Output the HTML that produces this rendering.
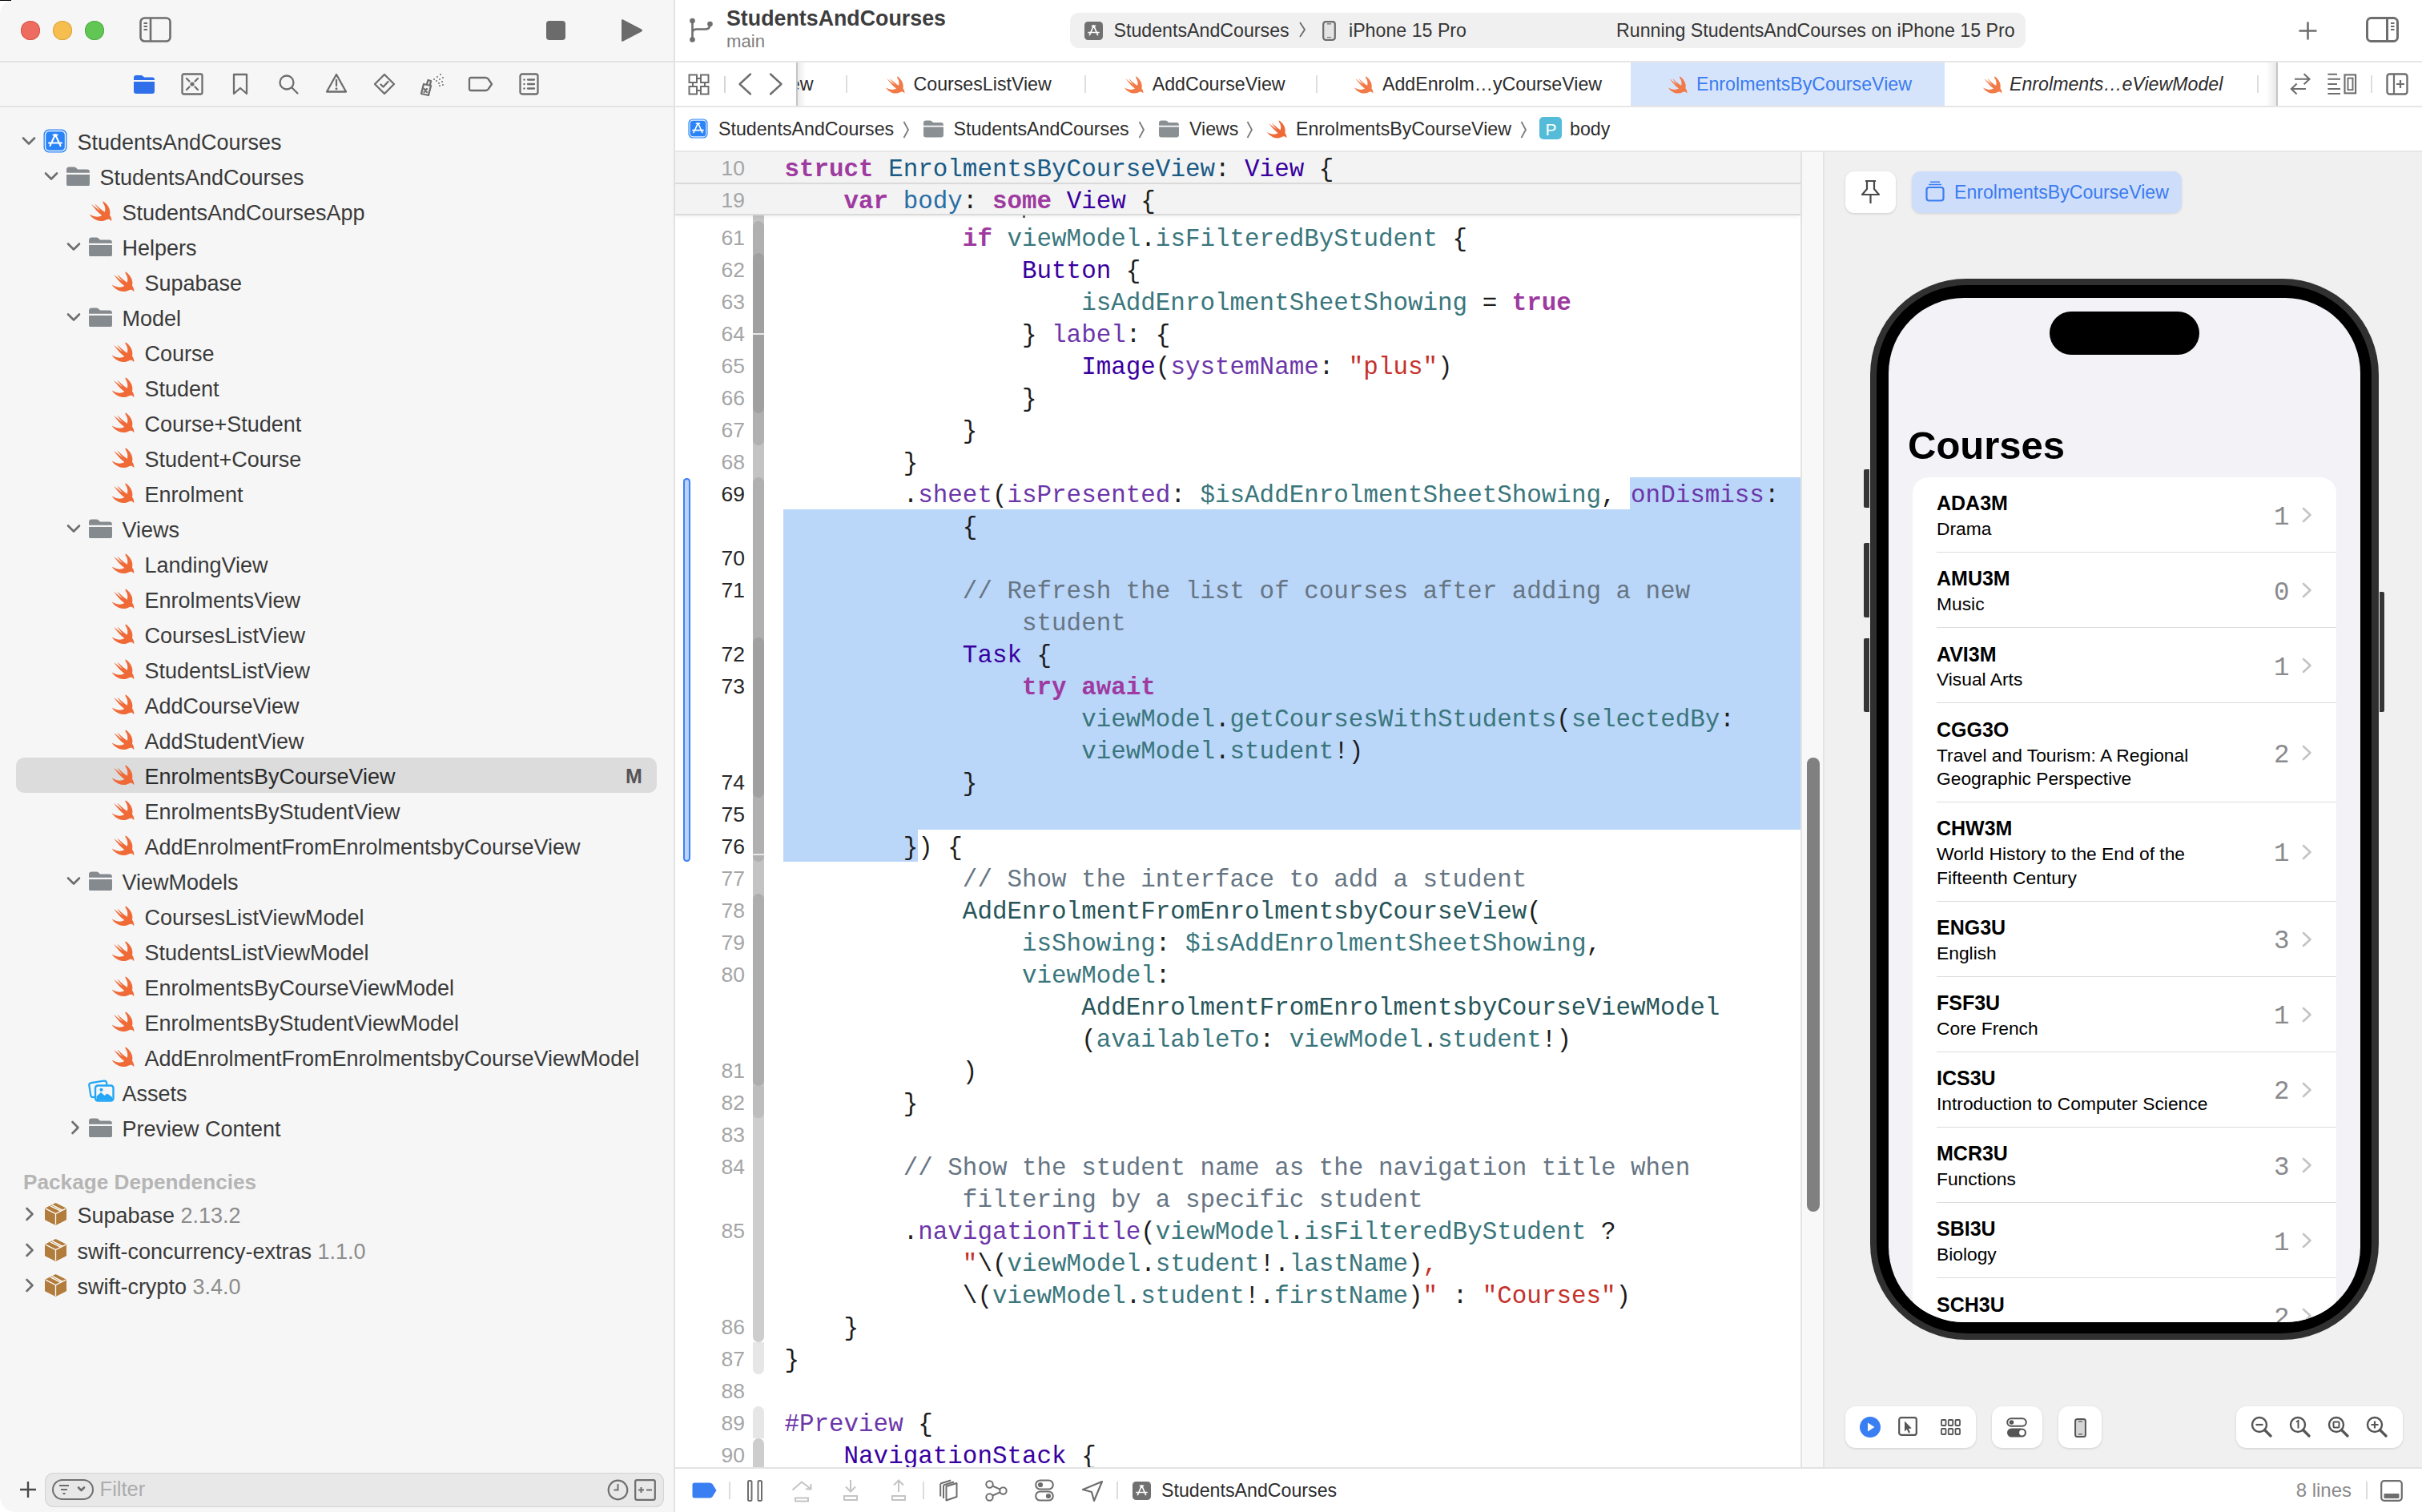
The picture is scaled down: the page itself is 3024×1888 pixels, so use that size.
<!DOCTYPE html>
<html><head><meta charset="utf-8"><title>Xcode</title>
<style>
html,body{margin:0;padding:0;width:3024px;height:1888px;overflow:hidden;background:#fff;}
body{position:relative;font-family:'Liberation Sans', sans-serif;}
.cl span{white-space:pre}
</style></head><body>
<div style="position:absolute;left:0px;top:0px;width:842px;height:1888px;background:#f6f6f6"></div><div style="position:absolute;left:842px;top:0px;width:2182px;height:1888px;background:#ffffff"></div><div style="position:absolute;left:841px;top:0px;width:2px;height:1888px;background:#e2e2e2"></div><div style="position:absolute;left:0px;top:76px;width:841px;height:2px;background:#e3e3e3"></div><div style="position:absolute;left:0px;top:132px;width:841px;height:2px;background:#e3e3e3"></div><div style="position:absolute;left:843px;top:76px;width:2181px;height:2px;background:#e6e6e6"></div><div style="position:absolute;left:843px;top:132px;width:2181px;height:2px;background:#e6e6e6"></div><div style="position:absolute;left:843px;top:188px;width:2181px;height:2px;background:#e6e6e6"></div><div style="position:absolute;left:2278px;top:190px;width:746px;height:1643px;background:#f0f0f0"></div><div style="position:absolute;left:2248px;top:190px;width:30px;height:1643px;background:#f8f8f8"></div><div style="position:absolute;left:2248px;top:190px;width:2px;height:1643px;background:#e4e4e4"></div><div style="position:absolute;left:2276px;top:190px;width:2px;height:1643px;background:#e4e4e4"></div><div style="position:absolute;left:843px;top:1832px;width:2181px;height:2px;background:#e3e3e3"></div><div style="position:absolute;left:26px;top:26px;width:24px;height:24px;background:#ee6b60;border-radius:50%;box-shadow:inset 0 0 0 1px #d8574c"></div><div style="position:absolute;left:66px;top:26px;width:24px;height:24px;background:#f6be4f;border-radius:50%;box-shadow:inset 0 0 0 1px #dba43a"></div><div style="position:absolute;left:106px;top:26px;width:24px;height:24px;background:#62c655;border-radius:50%;box-shadow:inset 0 0 0 1px #4fae43"></div><svg style="position:absolute;left:174px;top:21px;" width="40" height="32" viewBox="0 0 40 32"><rect x="1.5" y="1.5" width="37" height="29" rx="5" fill="none" stroke="#6e6e6e" stroke-width="2.6"/><line x1="14" y1="2" x2="14" y2="30" stroke="#6e6e6e" stroke-width="2.6"/><line x1="5.5" y1="8" x2="10" y2="8" stroke="#6e6e6e" stroke-width="2"/><line x1="5.5" y1="12" x2="10" y2="12" stroke="#6e6e6e" stroke-width="2"/><line x1="5.5" y1="16" x2="10" y2="16" stroke="#6e6e6e" stroke-width="2"/></svg><div style="position:absolute;left:682px;top:26px;width:24px;height:24px;background:#6b6b6b;border-radius:4px"></div><svg style="position:absolute;left:774px;top:23px;" width="30" height="30" viewBox="0 0 30 30"><path d="M2 2.5 Q2 0.5 4 1.6 L27 13.5 Q29 15 27 16.5 L4 28.4 Q2 29.5 2 27.5Z" fill="#6b6b6b"/></svg><svg style="position:absolute;left:166px;top:92px;" width="28" height="26" viewBox="0 0 28 26"><path d="M1 5 Q1 2 4 2 L10 2 Q12 2 13 3.5 L14 4.5 L24 4.5 Q27 4.5 27 7.5 L27 8 L1 8Z" fill="#2f6fea"/><path d="M1 10 L27 10 L27 22 Q27 25 24 25 L4 25 Q1 25 1 22Z" fill="#2f6fea"/></svg><svg style="position:absolute;left:226px;top:91px;" width="28" height="28" viewBox="0 0 28 28"><rect x="1.5" y="1.5" width="25" height="25" rx="2" fill="none" stroke="#6e6e6e" stroke-width="2.3" stroke-linecap="round" stroke-linejoin="round"/><path d="M7 7 L10.5 10.5 M21 7 L17.5 10.5 M7 21 L10.5 17.5 M21 21 L17.5 17.5" fill="none" stroke="#6e6e6e" stroke-width="2.3" stroke-linecap="round" stroke-linejoin="round" stroke-width="2.2"/><circle cx="14" cy="14" r="2.6" fill="#6e6e6e"/></svg><svg style="position:absolute;left:290px;top:91px;" width="20" height="28" viewBox="0 0 20 28"><path d="M2 2 L18 2 L18 26 L10 19 L2 26Z" fill="none" stroke="#6e6e6e" stroke-width="2.3" stroke-linecap="round" stroke-linejoin="round"/></svg><svg style="position:absolute;left:347px;top:92px;" width="27" height="27" viewBox="0 0 27 27"><circle cx="11" cy="11" r="8.5" fill="none" stroke="#6e6e6e" stroke-width="2.3" stroke-linecap="round" stroke-linejoin="round"/><path d="M17.5 17.5 L24.5 24.5" fill="none" stroke="#6e6e6e" stroke-width="2.3" stroke-linecap="round" stroke-linejoin="round" stroke-width="3"/></svg><svg style="position:absolute;left:406px;top:91px;" width="28" height="26" viewBox="0 0 28 26"><path d="M14 2 L26 23.5 L2 23.5Z" fill="none" stroke="#6e6e6e" stroke-width="2.3" stroke-linecap="round" stroke-linejoin="round"/><path d="M14 9 L14 16" fill="none" stroke="#6e6e6e" stroke-width="2.3" stroke-linecap="round" stroke-linejoin="round" stroke-width="2.8"/><circle cx="14" cy="19.8" r="1.5" fill="#6e6e6e"/></svg><svg style="position:absolute;left:466px;top:91px;" width="28" height="28" viewBox="0 0 28 28"><path d="M14 2 L26 14 L14 26 L2 14Z" fill="none" stroke="#6e6e6e" stroke-width="2.3" stroke-linecap="round" stroke-linejoin="round"/><path d="M9.5 14.5 L12.5 17.5 L18.5 11" fill="none" stroke="#6e6e6e" stroke-width="2.3" stroke-linecap="round" stroke-linejoin="round"/></svg><svg style="position:absolute;left:525px;top:91px;" width="32" height="30" viewBox="0 0 32 30"><path d="M4 14 L13 16 L10 28 L1 26Z" fill="none" stroke="#6e6e6e" stroke-width="2.3" stroke-linecap="round" stroke-linejoin="round" stroke-width="2.4"/><path d="M8 14 L9.5 9 L13 10 L12 15" fill="none" stroke="#6e6e6e" stroke-width="2.3" stroke-linecap="round" stroke-linejoin="round" stroke-width="2.2"/><path d="M4.5 20 L8 24 M8 20 L4.5 24" fill="none" stroke="#6e6e6e" stroke-width="2.3" stroke-linecap="round" stroke-linejoin="round" stroke-width="1.8"/><g fill="#6e6e6e"><circle cx="17" cy="8" r="1"/><circle cx="21" cy="5" r="1"/><circle cx="25" cy="2" r="1"/><circle cx="20" cy="10" r="1"/><circle cx="24" cy="8" r="1"/><circle cx="28" cy="6" r="1"/><circle cx="23" cy="13" r="1"/><circle cx="27" cy="11" r="1"/><circle cx="24" cy="16" r="1"/><circle cx="28" cy="15" r="1"/></g></svg><svg style="position:absolute;left:584px;top:95px;" width="32" height="20" viewBox="0 0 32 20"><path d="M2 4 Q2 2 4 2 L22 2 Q24 2 25.5 3.5 L30 10 L25.5 16.5 Q24 18 22 18 L4 18 Q2 18 2 16Z" fill="none" stroke="#6e6e6e" stroke-width="2.3" stroke-linecap="round" stroke-linejoin="round"/></svg><svg style="position:absolute;left:648px;top:91px;" width="25" height="28" viewBox="0 0 25 28"><rect x="1.5" y="1.5" width="22" height="25" rx="2.5" fill="none" stroke="#6e6e6e" stroke-width="2.3" stroke-linecap="round" stroke-linejoin="round"/><path d="M11 8.5 L19 8.5 M11 14 L19 14 M11 19.5 L19 19.5" fill="none" stroke="#6e6e6e" stroke-width="2.3" stroke-linecap="round" stroke-linejoin="round" stroke-width="2.2"/><g fill="#6e6e6e"><circle cx="6.5" cy="8.5" r="1.2"/><circle cx="6.5" cy="14" r="1.2"/><circle cx="6.5" cy="19.5" r="1.2"/></g></svg><svg style="position:absolute;left:27px;top:170px;" width="18" height="12" viewBox="0 0 18 12"><path d="M2 2.5 L9 9.5 L16 2.5" fill="none" stroke="#6e6e6e" stroke-width="2.6" stroke-linecap="round" stroke-linejoin="round"/></svg><svg style="position:absolute;left:54px;top:161.0px;" width="30" height="30" viewBox="0 0 30 30"><rect x="0.5" y="0.5" width="29" height="29" rx="6.5" fill="#2a84f7"/><rect x="2.5" y="2.5" width="25" height="25" rx="5" fill="none" stroke="#fff" stroke-width="1.4" opacity="0.9"/><path d="M15 7 L8.5 21 M15 7 L21.5 21 M7 17.5 L23 17.5 M12.5 7.5 L17.5 7.5" stroke="#fff" stroke-width="2" stroke-linecap="round" fill="none"/></svg><div style="position:absolute;left:96.4px;top:164.69px;font:400 27px/27px 'Liberation Sans', sans-serif;color:#3a3a3a;white-space:pre;">StudentsAndCourses</div><svg style="position:absolute;left:55px;top:214px;" width="18" height="12" viewBox="0 0 18 12"><path d="M2 2.5 L9 9.5 L16 2.5" fill="none" stroke="#6e6e6e" stroke-width="2.6" stroke-linecap="round" stroke-linejoin="round"/></svg><svg style="position:absolute;left:83px;top:207.53px;" width="29" height="24.94" viewBox="0 0 29 25"><path d="M0 4 Q0 0.5 3.5 0.5 L9 0.5 Q11 0.5 12.5 2 L14 3.5 L25.5 3.5 Q29 3.5 29 7 L29 7.8 L0 7.8Z" fill="#858a8f"/><path d="M0 10 L29 10 L29 21.5 Q29 25 25.5 25 L3.5 25 Q0 25 0 21.5Z" fill="#858a8f"/></svg><div style="position:absolute;left:124.4px;top:208.69px;font:400 27px/27px 'Liberation Sans', sans-serif;color:#3a3a3a;white-space:pre;">StudentsAndCourses</div><svg style="position:absolute;left:111px;top:251.385px;overflow:visible" width="29" height="25.23" viewBox="2.4 3.3 18.3 16.4"><path d="M13.543 3.41c4.114 2.47 6.545 7.162 5.549 11.131-.024.093-.05.181-.076.272l.002.001c2.062 2.538 1.5 5.258 1.236 4.745-1.072-2.086-3.066-1.568-4.088-1.043a6.803 6.803 0 0 1-.281.158l-.02.012-.002.002c-2.115 1.123-4.957 1.205-7.812-.022a12.568 12.568 0 0 1-5.64-4.838c.649.48 1.35.902 2.097 1.252 3.019 1.414 6.051 1.311 8.197-.002C9.651 12.73 7.101 9.67 5.146 7.191a10.628 10.628 0 0 1-1.005-1.384c2.34 2.142 6.038 4.83 7.365 5.576C8.69 8.408 6.208 4.743 7.353 5.887c3.785 3.836 7.318 6.132 7.318 6.132.117.064.209.114.282.16.074-.195.139-.39.194-.594.6-2.202-.08-4.702-1.596-6.759z" fill="#f06a38"/></svg><div style="position:absolute;left:152.4px;top:252.69px;font:400 27px/27px 'Liberation Sans', sans-serif;color:#3a3a3a;white-space:pre;">StudentsAndCoursesApp</div><svg style="position:absolute;left:83px;top:302px;" width="18" height="12" viewBox="0 0 18 12"><path d="M2 2.5 L9 9.5 L16 2.5" fill="none" stroke="#6e6e6e" stroke-width="2.6" stroke-linecap="round" stroke-linejoin="round"/></svg><svg style="position:absolute;left:111px;top:295.53px;" width="29" height="24.94" viewBox="0 0 29 25"><path d="M0 4 Q0 0.5 3.5 0.5 L9 0.5 Q11 0.5 12.5 2 L14 3.5 L25.5 3.5 Q29 3.5 29 7 L29 7.8 L0 7.8Z" fill="#858a8f"/><path d="M0 10 L29 10 L29 21.5 Q29 25 25.5 25 L3.5 25 Q0 25 0 21.5Z" fill="#858a8f"/></svg><div style="position:absolute;left:152.4px;top:296.69px;font:400 27px/27px 'Liberation Sans', sans-serif;color:#3a3a3a;white-space:pre;">Helpers</div><svg style="position:absolute;left:139px;top:339.385px;overflow:visible" width="29" height="25.23" viewBox="2.4 3.3 18.3 16.4"><path d="M13.543 3.41c4.114 2.47 6.545 7.162 5.549 11.131-.024.093-.05.181-.076.272l.002.001c2.062 2.538 1.5 5.258 1.236 4.745-1.072-2.086-3.066-1.568-4.088-1.043a6.803 6.803 0 0 1-.281.158l-.02.012-.002.002c-2.115 1.123-4.957 1.205-7.812-.022a12.568 12.568 0 0 1-5.64-4.838c.649.48 1.35.902 2.097 1.252 3.019 1.414 6.051 1.311 8.197-.002C9.651 12.73 7.101 9.67 5.146 7.191a10.628 10.628 0 0 1-1.005-1.384c2.34 2.142 6.038 4.83 7.365 5.576C8.69 8.408 6.208 4.743 7.353 5.887c3.785 3.836 7.318 6.132 7.318 6.132.117.064.209.114.282.16.074-.195.139-.39.194-.594.6-2.202-.08-4.702-1.596-6.759z" fill="#f06a38"/></svg><div style="position:absolute;left:180.4px;top:340.69px;font:400 27px/27px 'Liberation Sans', sans-serif;color:#3a3a3a;white-space:pre;">Supabase</div><svg style="position:absolute;left:83px;top:390px;" width="18" height="12" viewBox="0 0 18 12"><path d="M2 2.5 L9 9.5 L16 2.5" fill="none" stroke="#6e6e6e" stroke-width="2.6" stroke-linecap="round" stroke-linejoin="round"/></svg><svg style="position:absolute;left:111px;top:383.53px;" width="29" height="24.94" viewBox="0 0 29 25"><path d="M0 4 Q0 0.5 3.5 0.5 L9 0.5 Q11 0.5 12.5 2 L14 3.5 L25.5 3.5 Q29 3.5 29 7 L29 7.8 L0 7.8Z" fill="#858a8f"/><path d="M0 10 L29 10 L29 21.5 Q29 25 25.5 25 L3.5 25 Q0 25 0 21.5Z" fill="#858a8f"/></svg><div style="position:absolute;left:152.4px;top:384.69px;font:400 27px/27px 'Liberation Sans', sans-serif;color:#3a3a3a;white-space:pre;">Model</div><svg style="position:absolute;left:139px;top:427.385px;overflow:visible" width="29" height="25.23" viewBox="2.4 3.3 18.3 16.4"><path d="M13.543 3.41c4.114 2.47 6.545 7.162 5.549 11.131-.024.093-.05.181-.076.272l.002.001c2.062 2.538 1.5 5.258 1.236 4.745-1.072-2.086-3.066-1.568-4.088-1.043a6.803 6.803 0 0 1-.281.158l-.02.012-.002.002c-2.115 1.123-4.957 1.205-7.812-.022a12.568 12.568 0 0 1-5.64-4.838c.649.48 1.35.902 2.097 1.252 3.019 1.414 6.051 1.311 8.197-.002C9.651 12.73 7.101 9.67 5.146 7.191a10.628 10.628 0 0 1-1.005-1.384c2.34 2.142 6.038 4.83 7.365 5.576C8.69 8.408 6.208 4.743 7.353 5.887c3.785 3.836 7.318 6.132 7.318 6.132.117.064.209.114.282.16.074-.195.139-.39.194-.594.6-2.202-.08-4.702-1.596-6.759z" fill="#f06a38"/></svg><div style="position:absolute;left:180.4px;top:428.69px;font:400 27px/27px 'Liberation Sans', sans-serif;color:#3a3a3a;white-space:pre;">Course</div><svg style="position:absolute;left:139px;top:471.385px;overflow:visible" width="29" height="25.23" viewBox="2.4 3.3 18.3 16.4"><path d="M13.543 3.41c4.114 2.47 6.545 7.162 5.549 11.131-.024.093-.05.181-.076.272l.002.001c2.062 2.538 1.5 5.258 1.236 4.745-1.072-2.086-3.066-1.568-4.088-1.043a6.803 6.803 0 0 1-.281.158l-.02.012-.002.002c-2.115 1.123-4.957 1.205-7.812-.022a12.568 12.568 0 0 1-5.64-4.838c.649.48 1.35.902 2.097 1.252 3.019 1.414 6.051 1.311 8.197-.002C9.651 12.73 7.101 9.67 5.146 7.191a10.628 10.628 0 0 1-1.005-1.384c2.34 2.142 6.038 4.83 7.365 5.576C8.69 8.408 6.208 4.743 7.353 5.887c3.785 3.836 7.318 6.132 7.318 6.132.117.064.209.114.282.16.074-.195.139-.39.194-.594.6-2.202-.08-4.702-1.596-6.759z" fill="#f06a38"/></svg><div style="position:absolute;left:180.4px;top:472.69px;font:400 27px/27px 'Liberation Sans', sans-serif;color:#3a3a3a;white-space:pre;">Student</div><svg style="position:absolute;left:139px;top:515.385px;overflow:visible" width="29" height="25.23" viewBox="2.4 3.3 18.3 16.4"><path d="M13.543 3.41c4.114 2.47 6.545 7.162 5.549 11.131-.024.093-.05.181-.076.272l.002.001c2.062 2.538 1.5 5.258 1.236 4.745-1.072-2.086-3.066-1.568-4.088-1.043a6.803 6.803 0 0 1-.281.158l-.02.012-.002.002c-2.115 1.123-4.957 1.205-7.812-.022a12.568 12.568 0 0 1-5.64-4.838c.649.48 1.35.902 2.097 1.252 3.019 1.414 6.051 1.311 8.197-.002C9.651 12.73 7.101 9.67 5.146 7.191a10.628 10.628 0 0 1-1.005-1.384c2.34 2.142 6.038 4.83 7.365 5.576C8.69 8.408 6.208 4.743 7.353 5.887c3.785 3.836 7.318 6.132 7.318 6.132.117.064.209.114.282.16.074-.195.139-.39.194-.594.6-2.202-.08-4.702-1.596-6.759z" fill="#f06a38"/></svg><div style="position:absolute;left:180.4px;top:516.68px;font:400 27px/27px 'Liberation Sans', sans-serif;color:#3a3a3a;white-space:pre;">Course+Student</div><svg style="position:absolute;left:139px;top:559.385px;overflow:visible" width="29" height="25.23" viewBox="2.4 3.3 18.3 16.4"><path d="M13.543 3.41c4.114 2.47 6.545 7.162 5.549 11.131-.024.093-.05.181-.076.272l.002.001c2.062 2.538 1.5 5.258 1.236 4.745-1.072-2.086-3.066-1.568-4.088-1.043a6.803 6.803 0 0 1-.281.158l-.02.012-.002.002c-2.115 1.123-4.957 1.205-7.812-.022a12.568 12.568 0 0 1-5.64-4.838c.649.48 1.35.902 2.097 1.252 3.019 1.414 6.051 1.311 8.197-.002C9.651 12.73 7.101 9.67 5.146 7.191a10.628 10.628 0 0 1-1.005-1.384c2.34 2.142 6.038 4.83 7.365 5.576C8.69 8.408 6.208 4.743 7.353 5.887c3.785 3.836 7.318 6.132 7.318 6.132.117.064.209.114.282.16.074-.195.139-.39.194-.594.6-2.202-.08-4.702-1.596-6.759z" fill="#f06a38"/></svg><div style="position:absolute;left:180.4px;top:560.68px;font:400 27px/27px 'Liberation Sans', sans-serif;color:#3a3a3a;white-space:pre;">Student+Course</div><svg style="position:absolute;left:139px;top:603.385px;overflow:visible" width="29" height="25.23" viewBox="2.4 3.3 18.3 16.4"><path d="M13.543 3.41c4.114 2.47 6.545 7.162 5.549 11.131-.024.093-.05.181-.076.272l.002.001c2.062 2.538 1.5 5.258 1.236 4.745-1.072-2.086-3.066-1.568-4.088-1.043a6.803 6.803 0 0 1-.281.158l-.02.012-.002.002c-2.115 1.123-4.957 1.205-7.812-.022a12.568 12.568 0 0 1-5.64-4.838c.649.48 1.35.902 2.097 1.252 3.019 1.414 6.051 1.311 8.197-.002C9.651 12.73 7.101 9.67 5.146 7.191a10.628 10.628 0 0 1-1.005-1.384c2.34 2.142 6.038 4.83 7.365 5.576C8.69 8.408 6.208 4.743 7.353 5.887c3.785 3.836 7.318 6.132 7.318 6.132.117.064.209.114.282.16.074-.195.139-.39.194-.594.6-2.202-.08-4.702-1.596-6.759z" fill="#f06a38"/></svg><div style="position:absolute;left:180.4px;top:604.68px;font:400 27px/27px 'Liberation Sans', sans-serif;color:#3a3a3a;white-space:pre;">Enrolment</div><svg style="position:absolute;left:83px;top:654px;" width="18" height="12" viewBox="0 0 18 12"><path d="M2 2.5 L9 9.5 L16 2.5" fill="none" stroke="#6e6e6e" stroke-width="2.6" stroke-linecap="round" stroke-linejoin="round"/></svg><svg style="position:absolute;left:111px;top:647.53px;" width="29" height="24.94" viewBox="0 0 29 25"><path d="M0 4 Q0 0.5 3.5 0.5 L9 0.5 Q11 0.5 12.5 2 L14 3.5 L25.5 3.5 Q29 3.5 29 7 L29 7.8 L0 7.8Z" fill="#858a8f"/><path d="M0 10 L29 10 L29 21.5 Q29 25 25.5 25 L3.5 25 Q0 25 0 21.5Z" fill="#858a8f"/></svg><div style="position:absolute;left:152.4px;top:648.68px;font:400 27px/27px 'Liberation Sans', sans-serif;color:#3a3a3a;white-space:pre;">Views</div><svg style="position:absolute;left:139px;top:691.385px;overflow:visible" width="29" height="25.23" viewBox="2.4 3.3 18.3 16.4"><path d="M13.543 3.41c4.114 2.47 6.545 7.162 5.549 11.131-.024.093-.05.181-.076.272l.002.001c2.062 2.538 1.5 5.258 1.236 4.745-1.072-2.086-3.066-1.568-4.088-1.043a6.803 6.803 0 0 1-.281.158l-.02.012-.002.002c-2.115 1.123-4.957 1.205-7.812-.022a12.568 12.568 0 0 1-5.64-4.838c.649.48 1.35.902 2.097 1.252 3.019 1.414 6.051 1.311 8.197-.002C9.651 12.73 7.101 9.67 5.146 7.191a10.628 10.628 0 0 1-1.005-1.384c2.34 2.142 6.038 4.83 7.365 5.576C8.69 8.408 6.208 4.743 7.353 5.887c3.785 3.836 7.318 6.132 7.318 6.132.117.064.209.114.282.16.074-.195.139-.39.194-.594.6-2.202-.08-4.702-1.596-6.759z" fill="#f06a38"/></svg><div style="position:absolute;left:180.4px;top:692.68px;font:400 27px/27px 'Liberation Sans', sans-serif;color:#3a3a3a;white-space:pre;">LandingView</div><svg style="position:absolute;left:139px;top:735.385px;overflow:visible" width="29" height="25.23" viewBox="2.4 3.3 18.3 16.4"><path d="M13.543 3.41c4.114 2.47 6.545 7.162 5.549 11.131-.024.093-.05.181-.076.272l.002.001c2.062 2.538 1.5 5.258 1.236 4.745-1.072-2.086-3.066-1.568-4.088-1.043a6.803 6.803 0 0 1-.281.158l-.02.012-.002.002c-2.115 1.123-4.957 1.205-7.812-.022a12.568 12.568 0 0 1-5.64-4.838c.649.48 1.35.902 2.097 1.252 3.019 1.414 6.051 1.311 8.197-.002C9.651 12.73 7.101 9.67 5.146 7.191a10.628 10.628 0 0 1-1.005-1.384c2.34 2.142 6.038 4.83 7.365 5.576C8.69 8.408 6.208 4.743 7.353 5.887c3.785 3.836 7.318 6.132 7.318 6.132.117.064.209.114.282.16.074-.195.139-.39.194-.594.6-2.202-.08-4.702-1.596-6.759z" fill="#f06a38"/></svg><div style="position:absolute;left:180.4px;top:736.68px;font:400 27px/27px 'Liberation Sans', sans-serif;color:#3a3a3a;white-space:pre;">EnrolmentsView</div><svg style="position:absolute;left:139px;top:779.385px;overflow:visible" width="29" height="25.23" viewBox="2.4 3.3 18.3 16.4"><path d="M13.543 3.41c4.114 2.47 6.545 7.162 5.549 11.131-.024.093-.05.181-.076.272l.002.001c2.062 2.538 1.5 5.258 1.236 4.745-1.072-2.086-3.066-1.568-4.088-1.043a6.803 6.803 0 0 1-.281.158l-.02.012-.002.002c-2.115 1.123-4.957 1.205-7.812-.022a12.568 12.568 0 0 1-5.64-4.838c.649.48 1.35.902 2.097 1.252 3.019 1.414 6.051 1.311 8.197-.002C9.651 12.73 7.101 9.67 5.146 7.191a10.628 10.628 0 0 1-1.005-1.384c2.34 2.142 6.038 4.83 7.365 5.576C8.69 8.408 6.208 4.743 7.353 5.887c3.785 3.836 7.318 6.132 7.318 6.132.117.064.209.114.282.16.074-.195.139-.39.194-.594.6-2.202-.08-4.702-1.596-6.759z" fill="#f06a38"/></svg><div style="position:absolute;left:180.4px;top:780.68px;font:400 27px/27px 'Liberation Sans', sans-serif;color:#3a3a3a;white-space:pre;">CoursesListView</div><svg style="position:absolute;left:139px;top:823.385px;overflow:visible" width="29" height="25.23" viewBox="2.4 3.3 18.3 16.4"><path d="M13.543 3.41c4.114 2.47 6.545 7.162 5.549 11.131-.024.093-.05.181-.076.272l.002.001c2.062 2.538 1.5 5.258 1.236 4.745-1.072-2.086-3.066-1.568-4.088-1.043a6.803 6.803 0 0 1-.281.158l-.02.012-.002.002c-2.115 1.123-4.957 1.205-7.812-.022a12.568 12.568 0 0 1-5.64-4.838c.649.48 1.35.902 2.097 1.252 3.019 1.414 6.051 1.311 8.197-.002C9.651 12.73 7.101 9.67 5.146 7.191a10.628 10.628 0 0 1-1.005-1.384c2.34 2.142 6.038 4.83 7.365 5.576C8.69 8.408 6.208 4.743 7.353 5.887c3.785 3.836 7.318 6.132 7.318 6.132.117.064.209.114.282.16.074-.195.139-.39.194-.594.6-2.202-.08-4.702-1.596-6.759z" fill="#f06a38"/></svg><div style="position:absolute;left:180.4px;top:824.68px;font:400 27px/27px 'Liberation Sans', sans-serif;color:#3a3a3a;white-space:pre;">StudentsListView</div><svg style="position:absolute;left:139px;top:867.385px;overflow:visible" width="29" height="25.23" viewBox="2.4 3.3 18.3 16.4"><path d="M13.543 3.41c4.114 2.47 6.545 7.162 5.549 11.131-.024.093-.05.181-.076.272l.002.001c2.062 2.538 1.5 5.258 1.236 4.745-1.072-2.086-3.066-1.568-4.088-1.043a6.803 6.803 0 0 1-.281.158l-.02.012-.002.002c-2.115 1.123-4.957 1.205-7.812-.022a12.568 12.568 0 0 1-5.64-4.838c.649.48 1.35.902 2.097 1.252 3.019 1.414 6.051 1.311 8.197-.002C9.651 12.73 7.101 9.67 5.146 7.191a10.628 10.628 0 0 1-1.005-1.384c2.34 2.142 6.038 4.83 7.365 5.576C8.69 8.408 6.208 4.743 7.353 5.887c3.785 3.836 7.318 6.132 7.318 6.132.117.064.209.114.282.16.074-.195.139-.39.194-.594.6-2.202-.08-4.702-1.596-6.759z" fill="#f06a38"/></svg><div style="position:absolute;left:180.4px;top:868.68px;font:400 27px/27px 'Liberation Sans', sans-serif;color:#3a3a3a;white-space:pre;">AddCourseView</div><svg style="position:absolute;left:139px;top:911.385px;overflow:visible" width="29" height="25.23" viewBox="2.4 3.3 18.3 16.4"><path d="M13.543 3.41c4.114 2.47 6.545 7.162 5.549 11.131-.024.093-.05.181-.076.272l.002.001c2.062 2.538 1.5 5.258 1.236 4.745-1.072-2.086-3.066-1.568-4.088-1.043a6.803 6.803 0 0 1-.281.158l-.02.012-.002.002c-2.115 1.123-4.957 1.205-7.812-.022a12.568 12.568 0 0 1-5.64-4.838c.649.48 1.35.902 2.097 1.252 3.019 1.414 6.051 1.311 8.197-.002C9.651 12.73 7.101 9.67 5.146 7.191a10.628 10.628 0 0 1-1.005-1.384c2.34 2.142 6.038 4.83 7.365 5.576C8.69 8.408 6.208 4.743 7.353 5.887c3.785 3.836 7.318 6.132 7.318 6.132.117.064.209.114.282.16.074-.195.139-.39.194-.594.6-2.202-.08-4.702-1.596-6.759z" fill="#f06a38"/></svg><div style="position:absolute;left:180.4px;top:912.68px;font:400 27px/27px 'Liberation Sans', sans-serif;color:#3a3a3a;white-space:pre;">AddStudentView</div><div style="position:absolute;left:20px;top:946px;width:800px;height:44px;background:#dcdcdc;border-radius:10px"></div><svg style="position:absolute;left:139px;top:955.385px;overflow:visible" width="29" height="25.23" viewBox="2.4 3.3 18.3 16.4"><path d="M13.543 3.41c4.114 2.47 6.545 7.162 5.549 11.131-.024.093-.05.181-.076.272l.002.001c2.062 2.538 1.5 5.258 1.236 4.745-1.072-2.086-3.066-1.568-4.088-1.043a6.803 6.803 0 0 1-.281.158l-.02.012-.002.002c-2.115 1.123-4.957 1.205-7.812-.022a12.568 12.568 0 0 1-5.64-4.838c.649.48 1.35.902 2.097 1.252 3.019 1.414 6.051 1.311 8.197-.002C9.651 12.73 7.101 9.67 5.146 7.191a10.628 10.628 0 0 1-1.005-1.384c2.34 2.142 6.038 4.83 7.365 5.576C8.69 8.408 6.208 4.743 7.353 5.887c3.785 3.836 7.318 6.132 7.318 6.132.117.064.209.114.282.16.074-.195.139-.39.194-.594.6-2.202-.08-4.702-1.596-6.759z" fill="#f06a38"/></svg><div style="position:absolute;left:180.4px;top:956.68px;font:400 27px/27px 'Liberation Sans', sans-serif;color:#2a2a2a;white-space:pre;">EnrolmentsByCourseView</div><div style="position:absolute;left:781px;top:956.88px;font:700 25px/25px 'Liberation Sans', sans-serif;color:#555;white-space:pre;">M</div><svg style="position:absolute;left:139px;top:999.385px;overflow:visible" width="29" height="25.23" viewBox="2.4 3.3 18.3 16.4"><path d="M13.543 3.41c4.114 2.47 6.545 7.162 5.549 11.131-.024.093-.05.181-.076.272l.002.001c2.062 2.538 1.5 5.258 1.236 4.745-1.072-2.086-3.066-1.568-4.088-1.043a6.803 6.803 0 0 1-.281.158l-.02.012-.002.002c-2.115 1.123-4.957 1.205-7.812-.022a12.568 12.568 0 0 1-5.64-4.838c.649.48 1.35.902 2.097 1.252 3.019 1.414 6.051 1.311 8.197-.002C9.651 12.73 7.101 9.67 5.146 7.191a10.628 10.628 0 0 1-1.005-1.384c2.34 2.142 6.038 4.83 7.365 5.576C8.69 8.408 6.208 4.743 7.353 5.887c3.785 3.836 7.318 6.132 7.318 6.132.117.064.209.114.282.16.074-.195.139-.39.194-.594.6-2.202-.08-4.702-1.596-6.759z" fill="#f06a38"/></svg><div style="position:absolute;left:180.4px;top:1000.68px;font:400 27px/27px 'Liberation Sans', sans-serif;color:#3a3a3a;white-space:pre;">EnrolmentsByStudentView</div><svg style="position:absolute;left:139px;top:1043.385px;overflow:visible" width="29" height="25.23" viewBox="2.4 3.3 18.3 16.4"><path d="M13.543 3.41c4.114 2.47 6.545 7.162 5.549 11.131-.024.093-.05.181-.076.272l.002.001c2.062 2.538 1.5 5.258 1.236 4.745-1.072-2.086-3.066-1.568-4.088-1.043a6.803 6.803 0 0 1-.281.158l-.02.012-.002.002c-2.115 1.123-4.957 1.205-7.812-.022a12.568 12.568 0 0 1-5.64-4.838c.649.48 1.35.902 2.097 1.252 3.019 1.414 6.051 1.311 8.197-.002C9.651 12.73 7.101 9.67 5.146 7.191a10.628 10.628 0 0 1-1.005-1.384c2.34 2.142 6.038 4.83 7.365 5.576C8.69 8.408 6.208 4.743 7.353 5.887c3.785 3.836 7.318 6.132 7.318 6.132.117.064.209.114.282.16.074-.195.139-.39.194-.594.6-2.202-.08-4.702-1.596-6.759z" fill="#f06a38"/></svg><div style="position:absolute;left:180.4px;top:1044.68px;font:400 27px/27px 'Liberation Sans', sans-serif;color:#3a3a3a;white-space:pre;">AddEnrolmentFromEnrolmentsbyCourseView</div><svg style="position:absolute;left:83px;top:1094px;" width="18" height="12" viewBox="0 0 18 12"><path d="M2 2.5 L9 9.5 L16 2.5" fill="none" stroke="#6e6e6e" stroke-width="2.6" stroke-linecap="round" stroke-linejoin="round"/></svg><svg style="position:absolute;left:111px;top:1087.53px;" width="29" height="24.94" viewBox="0 0 29 25"><path d="M0 4 Q0 0.5 3.5 0.5 L9 0.5 Q11 0.5 12.5 2 L14 3.5 L25.5 3.5 Q29 3.5 29 7 L29 7.8 L0 7.8Z" fill="#858a8f"/><path d="M0 10 L29 10 L29 21.5 Q29 25 25.5 25 L3.5 25 Q0 25 0 21.5Z" fill="#858a8f"/></svg><div style="position:absolute;left:152.4px;top:1088.68px;font:400 27px/27px 'Liberation Sans', sans-serif;color:#3a3a3a;white-space:pre;">ViewModels</div><svg style="position:absolute;left:139px;top:1131.385px;overflow:visible" width="29" height="25.23" viewBox="2.4 3.3 18.3 16.4"><path d="M13.543 3.41c4.114 2.47 6.545 7.162 5.549 11.131-.024.093-.05.181-.076.272l.002.001c2.062 2.538 1.5 5.258 1.236 4.745-1.072-2.086-3.066-1.568-4.088-1.043a6.803 6.803 0 0 1-.281.158l-.02.012-.002.002c-2.115 1.123-4.957 1.205-7.812-.022a12.568 12.568 0 0 1-5.64-4.838c.649.48 1.35.902 2.097 1.252 3.019 1.414 6.051 1.311 8.197-.002C9.651 12.73 7.101 9.67 5.146 7.191a10.628 10.628 0 0 1-1.005-1.384c2.34 2.142 6.038 4.83 7.365 5.576C8.69 8.408 6.208 4.743 7.353 5.887c3.785 3.836 7.318 6.132 7.318 6.132.117.064.209.114.282.16.074-.195.139-.39.194-.594.6-2.202-.08-4.702-1.596-6.759z" fill="#f06a38"/></svg><div style="position:absolute;left:180.4px;top:1132.68px;font:400 27px/27px 'Liberation Sans', sans-serif;color:#3a3a3a;white-space:pre;">CoursesListViewModel</div><svg style="position:absolute;left:139px;top:1175.385px;overflow:visible" width="29" height="25.23" viewBox="2.4 3.3 18.3 16.4"><path d="M13.543 3.41c4.114 2.47 6.545 7.162 5.549 11.131-.024.093-.05.181-.076.272l.002.001c2.062 2.538 1.5 5.258 1.236 4.745-1.072-2.086-3.066-1.568-4.088-1.043a6.803 6.803 0 0 1-.281.158l-.02.012-.002.002c-2.115 1.123-4.957 1.205-7.812-.022a12.568 12.568 0 0 1-5.64-4.838c.649.48 1.35.902 2.097 1.252 3.019 1.414 6.051 1.311 8.197-.002C9.651 12.73 7.101 9.67 5.146 7.191a10.628 10.628 0 0 1-1.005-1.384c2.34 2.142 6.038 4.83 7.365 5.576C8.69 8.408 6.208 4.743 7.353 5.887c3.785 3.836 7.318 6.132 7.318 6.132.117.064.209.114.282.16.074-.195.139-.39.194-.594.6-2.202-.08-4.702-1.596-6.759z" fill="#f06a38"/></svg><div style="position:absolute;left:180.4px;top:1176.68px;font:400 27px/27px 'Liberation Sans', sans-serif;color:#3a3a3a;white-space:pre;">StudentsListViewModel</div><svg style="position:absolute;left:139px;top:1219.385px;overflow:visible" width="29" height="25.23" viewBox="2.4 3.3 18.3 16.4"><path d="M13.543 3.41c4.114 2.47 6.545 7.162 5.549 11.131-.024.093-.05.181-.076.272l.002.001c2.062 2.538 1.5 5.258 1.236 4.745-1.072-2.086-3.066-1.568-4.088-1.043a6.803 6.803 0 0 1-.281.158l-.02.012-.002.002c-2.115 1.123-4.957 1.205-7.812-.022a12.568 12.568 0 0 1-5.64-4.838c.649.48 1.35.902 2.097 1.252 3.019 1.414 6.051 1.311 8.197-.002C9.651 12.73 7.101 9.67 5.146 7.191a10.628 10.628 0 0 1-1.005-1.384c2.34 2.142 6.038 4.83 7.365 5.576C8.69 8.408 6.208 4.743 7.353 5.887c3.785 3.836 7.318 6.132 7.318 6.132.117.064.209.114.282.16.074-.195.139-.39.194-.594.6-2.202-.08-4.702-1.596-6.759z" fill="#f06a38"/></svg><div style="position:absolute;left:180.4px;top:1220.68px;font:400 27px/27px 'Liberation Sans', sans-serif;color:#3a3a3a;white-space:pre;">EnrolmentsByCourseViewModel</div><svg style="position:absolute;left:139px;top:1263.385px;overflow:visible" width="29" height="25.23" viewBox="2.4 3.3 18.3 16.4"><path d="M13.543 3.41c4.114 2.47 6.545 7.162 5.549 11.131-.024.093-.05.181-.076.272l.002.001c2.062 2.538 1.5 5.258 1.236 4.745-1.072-2.086-3.066-1.568-4.088-1.043a6.803 6.803 0 0 1-.281.158l-.02.012-.002.002c-2.115 1.123-4.957 1.205-7.812-.022a12.568 12.568 0 0 1-5.64-4.838c.649.48 1.35.902 2.097 1.252 3.019 1.414 6.051 1.311 8.197-.002C9.651 12.73 7.101 9.67 5.146 7.191a10.628 10.628 0 0 1-1.005-1.384c2.34 2.142 6.038 4.83 7.365 5.576C8.69 8.408 6.208 4.743 7.353 5.887c3.785 3.836 7.318 6.132 7.318 6.132.117.064.209.114.282.16.074-.195.139-.39.194-.594.6-2.202-.08-4.702-1.596-6.759z" fill="#f06a38"/></svg><div style="position:absolute;left:180.4px;top:1264.68px;font:400 27px/27px 'Liberation Sans', sans-serif;color:#3a3a3a;white-space:pre;">EnrolmentsByStudentViewModel</div><svg style="position:absolute;left:139px;top:1307.385px;overflow:visible" width="29" height="25.23" viewBox="2.4 3.3 18.3 16.4"><path d="M13.543 3.41c4.114 2.47 6.545 7.162 5.549 11.131-.024.093-.05.181-.076.272l.002.001c2.062 2.538 1.5 5.258 1.236 4.745-1.072-2.086-3.066-1.568-4.088-1.043a6.803 6.803 0 0 1-.281.158l-.02.012-.002.002c-2.115 1.123-4.957 1.205-7.812-.022a12.568 12.568 0 0 1-5.64-4.838c.649.48 1.35.902 2.097 1.252 3.019 1.414 6.051 1.311 8.197-.002C9.651 12.73 7.101 9.67 5.146 7.191a10.628 10.628 0 0 1-1.005-1.384c2.34 2.142 6.038 4.83 7.365 5.576C8.69 8.408 6.208 4.743 7.353 5.887c3.785 3.836 7.318 6.132 7.318 6.132.117.064.209.114.282.16.074-.195.139-.39.194-.594.6-2.202-.08-4.702-1.596-6.759z" fill="#f06a38"/></svg><div style="position:absolute;left:180.4px;top:1308.68px;font:400 27px/27px 'Liberation Sans', sans-serif;color:#3a3a3a;white-space:pre;">AddEnrolmentFromEnrolmentsbyCourseViewModel</div><svg style="position:absolute;left:110px;top:1347px;" width="33" height="30" viewBox="0 0 33 30"><g transform="rotate(-9 12 12)"><rect x="2" y="4" width="22" height="18" rx="3" fill="none" stroke="#22a6f5" stroke-width="2.2"/></g><rect x="9" y="8.5" width="22.5" height="19" rx="3.2" fill="#f6f6f6" stroke="#22a6f5" stroke-width="2.4"/><path d="M10.5 26.5 L10.5 22 L16 17 L20.5 21 L24 18.5 L30 23 L30 26.5Z" fill="#22a6f5"/><circle cx="16.5" cy="13.8" r="2.1" fill="#22a6f5"/></svg><div style="position:absolute;left:152.4px;top:1352.68px;font:400 27px/27px 'Liberation Sans', sans-serif;color:#3a3a3a;white-space:pre;">Assets</div><svg style="position:absolute;left:88px;top:1399px;" width="12" height="18" viewBox="0 0 12 18"><path d="M2.5 2 L9.5 9 L2.5 16" fill="none" stroke="#6e6e6e" stroke-width="2.6" stroke-linecap="round" stroke-linejoin="round"/></svg><svg style="position:absolute;left:111px;top:1395.53px;" width="29" height="24.94" viewBox="0 0 29 25"><path d="M0 4 Q0 0.5 3.5 0.5 L9 0.5 Q11 0.5 12.5 2 L14 3.5 L25.5 3.5 Q29 3.5 29 7 L29 7.8 L0 7.8Z" fill="#858a8f"/><path d="M0 10 L29 10 L29 21.5 Q29 25 25.5 25 L3.5 25 Q0 25 0 21.5Z" fill="#858a8f"/></svg><div style="position:absolute;left:152.4px;top:1396.68px;font:400 27px/27px 'Liberation Sans', sans-serif;color:#3a3a3a;white-space:pre;">Preview Content</div><div style="position:absolute;left:29px;top:1463.36px;font:700 26.2px/26.2px 'Liberation Sans', sans-serif;color:#b5b5b5;white-space:pre;">Package Dependencies</div><svg style="position:absolute;left:31px;top:1507px;" width="12" height="18" viewBox="0 0 12 18"><path d="M2.5 2 L9.5 9 L2.5 16" fill="none" stroke="#6e6e6e" stroke-width="2.6" stroke-linecap="round" stroke-linejoin="round"/></svg><svg style="position:absolute;left:56px;top:1502px;" width="27" height="28" viewBox="0 0 27 28"><path d="M13.5 0.5 L26.5 7 L26.5 21 L13.5 27.5 L0.5 21 L0.5 7Z" fill="#b17c3c" stroke="#b17c3c" stroke-width="1" stroke-linejoin="round"/><path d="M0.8 7.2 L13.5 13.6 L26.2 7.2 M13.5 13.6 L13.5 27.3 M7 3.8 L19.8 10.2 M9.2 2.6 L21.9 9.1" fill="none" stroke="#fff" stroke-width="1.3"/></svg><div style="position:absolute;left:96.4px;top:1504.68px;font:400 27px/27px 'Liberation Sans', sans-serif;color:#3a3a3a;white-space:pre">Supabase <span style="color:#8c8c8c">2.13.2</span></div><svg style="position:absolute;left:31px;top:1552px;" width="12" height="18" viewBox="0 0 12 18"><path d="M2.5 2 L9.5 9 L2.5 16" fill="none" stroke="#6e6e6e" stroke-width="2.6" stroke-linecap="round" stroke-linejoin="round"/></svg><svg style="position:absolute;left:56px;top:1547px;" width="27" height="28" viewBox="0 0 27 28"><path d="M13.5 0.5 L26.5 7 L26.5 21 L13.5 27.5 L0.5 21 L0.5 7Z" fill="#b17c3c" stroke="#b17c3c" stroke-width="1" stroke-linejoin="round"/><path d="M0.8 7.2 L13.5 13.6 L26.2 7.2 M13.5 13.6 L13.5 27.3 M7 3.8 L19.8 10.2 M9.2 2.6 L21.9 9.1" fill="none" stroke="#fff" stroke-width="1.3"/></svg><div style="position:absolute;left:96.4px;top:1549.68px;font:400 27px/27px 'Liberation Sans', sans-serif;color:#3a3a3a;white-space:pre">swift-concurrency-extras <span style="color:#8c8c8c">1.1.0</span></div><svg style="position:absolute;left:31px;top:1596px;" width="12" height="18" viewBox="0 0 12 18"><path d="M2.5 2 L9.5 9 L2.5 16" fill="none" stroke="#6e6e6e" stroke-width="2.6" stroke-linecap="round" stroke-linejoin="round"/></svg><svg style="position:absolute;left:56px;top:1591px;" width="27" height="28" viewBox="0 0 27 28"><path d="M13.5 0.5 L26.5 7 L26.5 21 L13.5 27.5 L0.5 21 L0.5 7Z" fill="#b17c3c" stroke="#b17c3c" stroke-width="1" stroke-linejoin="round"/><path d="M0.8 7.2 L13.5 13.6 L26.2 7.2 M13.5 13.6 L13.5 27.3 M7 3.8 L19.8 10.2 M9.2 2.6 L21.9 9.1" fill="none" stroke="#fff" stroke-width="1.3"/></svg><div style="position:absolute;left:96.4px;top:1593.68px;font:400 27px/27px 'Liberation Sans', sans-serif;color:#3a3a3a;white-space:pre">swift-crypto <span style="color:#8c8c8c">3.4.0</span></div><svg style="position:absolute;left:24px;top:1849px;" width="22" height="22" viewBox="0 0 22 22"><path d="M11 1 L11 21 M1 11 L21 11" stroke="#4a4a4a" stroke-width="2.4" fill="none"/></svg><div style="position:absolute;left:56px;top:1839px;width:773px;height:43px;background:#e8e8e8;border-radius:11px;box-shadow:inset 0 0 0 1px #d3d3d3"></div><div style="position:absolute;left:65px;top:1847px;width:52px;height:26px;border-radius:13px;box-shadow:inset 0 0 0 2px #707070"></div><svg style="position:absolute;left:72px;top:1853px;" width="36" height="14" viewBox="0 0 36 14"><path d="M2 2 L14 2 M4 7 L12 7 M6.5 12 L9.5 12" stroke="#6e6e6e" stroke-width="2" fill="none"/><path d="M26 4.5 L29.5 8 L33 4.5" stroke="#6e6e6e" stroke-width="2.6" fill="none" stroke-linecap="round" stroke-linejoin="round"/></svg><div style="position:absolute;left:124.6px;top:1847.45px;font:400 25.5px/25.5px 'Liberation Sans', sans-serif;color:#acacac;white-space:pre;">Filter</div><svg style="position:absolute;left:758px;top:1847px;" width="27" height="27" viewBox="0 0 27 27"><circle cx="13.5" cy="13.5" r="11.8" fill="none" stroke="#6e6e6e" stroke-width="2.2"/><path d="M13.5 6 L13.5 13.5 L8.5 13.5" fill="none" stroke="#6e6e6e" stroke-width="2"/></svg><svg style="position:absolute;left:792px;top:1847px;" width="27" height="27" viewBox="0 0 27 27"><rect x="1.2" y="1.2" width="24.6" height="24.6" rx="2" fill="none" stroke="#6e6e6e" stroke-width="2.2"/><path d="M5 13.5 L12 13.5 M8.5 10 L8.5 17 M15 13.5 L22 13.5" stroke="#6e6e6e" stroke-width="2" fill="none"/></svg><div style="position:absolute;left:2035.1799999999998px;top:596px;width:212.82000000000016px;height:40px;background:#bad6f9"></div><div style="position:absolute;left:978px;top:636px;width:1270px;height:400px;background:#bad6f9"></div><div style="position:absolute;left:978px;top:1036px;width:168.26px;height:40px;background:#bad6f9"></div><div style="position:absolute;left:940px;top:196px;width:14px;height:1480px;background:#cdcdcd;border-radius:0 0 7px 7px"></div><div style="position:absolute;left:940px;top:196px;width:14px;height:1200px;background:#c3c3c3;border-radius:0 0 7px 7px"></div><div style="position:absolute;left:940px;top:1356px;width:14px;height:40px;background:#bdbdbd;border-radius:0 0 7px 7px"></div><div style="position:absolute;left:940px;top:276px;width:14px;height:280px;background:#b0b0b0;border-radius:7px 7px 7px 7px"></div><div style="position:absolute;left:940px;top:316px;width:14px;height:200px;background:#a0a0a0;border-radius:7px 7px 7px 7px"></div><div style="position:absolute;left:940px;top:416px;width:14px;height:2px;background:#e8e8e8"></div><div style="position:absolute;left:940px;top:596px;width:14px;height:480px;background:#b0b0b0;border-radius:7px 7px 7px 7px"></div><div style="position:absolute;left:940px;top:796px;width:14px;height:200px;background:#a0a0a0;border-radius:7px 7px 7px 7px"></div><div style="position:absolute;left:940px;top:1066px;width:14px;height:2px;background:#e8e8e8"></div><div style="position:absolute;left:940px;top:1116px;width:14px;height:240px;background:#adadad;border-radius:7px 7px 7px 7px"></div><div style="position:absolute;left:940px;top:1676px;width:14px;height:40px;background:#e6e6e6;border-radius:0 0 7px 7px"></div><div style="position:absolute;left:940px;top:1756px;width:14px;height:40px;background:#e6e6e6;border-radius:7px 7px 0 0"></div><div style="position:absolute;left:940px;top:1796px;width:14px;height:80px;background:#cdcdcd;border-radius:7px 7px 0 0"></div><div style="position:absolute;left:852.5px;top:597px;width:9px;height:479px;background:#bcd3fb;border-radius:5px;box-shadow:inset 0 0 0 2px #3f82f5"></div><div style="position:absolute;left:830px;width:100px;text-align:right;top:283.61px;font:400 26.5px/26.5px 'Liberation Sans', sans-serif;color:#a5a5a5">61</div><div style="position:absolute;left:979.4px;top:283.67px;font:400 30.9px/30.9px 'Liberation Mono', monospace;color:#1d1d1d;white-space:pre">            <span style="color:#9e3aa0;font-weight:700">if</span> <span style="color:#3a767c">viewModel</span>.<span style="color:#3a767c">isFilteredByStudent</span> {</div><div style="position:absolute;left:830px;width:100px;text-align:right;top:323.61px;font:400 26.5px/26.5px 'Liberation Sans', sans-serif;color:#a5a5a5">62</div><div style="position:absolute;left:979.4px;top:323.67px;font:400 30.9px/30.9px 'Liberation Mono', monospace;color:#1d1d1d;white-space:pre">                <span style="color:#3900a0">Button</span> {</div><div style="position:absolute;left:830px;width:100px;text-align:right;top:363.61px;font:400 26.5px/26.5px 'Liberation Sans', sans-serif;color:#a5a5a5">63</div><div style="position:absolute;left:979.4px;top:363.67px;font:400 30.9px/30.9px 'Liberation Mono', monospace;color:#1d1d1d;white-space:pre">                    <span style="color:#3a767c">isAddEnrolmentSheetShowing</span> = <span style="color:#9e3aa0;font-weight:700">true</span></div><div style="position:absolute;left:830px;width:100px;text-align:right;top:403.61px;font:400 26.5px/26.5px 'Liberation Sans', sans-serif;color:#a5a5a5">64</div><div style="position:absolute;left:979.4px;top:403.67px;font:400 30.9px/30.9px 'Liberation Mono', monospace;color:#1d1d1d;white-space:pre">                } <span style="color:#6c36a9">label</span>: {</div><div style="position:absolute;left:830px;width:100px;text-align:right;top:443.61px;font:400 26.5px/26.5px 'Liberation Sans', sans-serif;color:#a5a5a5">65</div><div style="position:absolute;left:979.4px;top:443.67px;font:400 30.9px/30.9px 'Liberation Mono', monospace;color:#1d1d1d;white-space:pre">                    <span style="color:#3900a0">Image</span>(<span style="color:#6c36a9">systemName</span>: <span style="color:#c4302a">"plus"</span>)</div><div style="position:absolute;left:830px;width:100px;text-align:right;top:483.61px;font:400 26.5px/26.5px 'Liberation Sans', sans-serif;color:#a5a5a5">66</div><div style="position:absolute;left:979.4px;top:483.67px;font:400 30.9px/30.9px 'Liberation Mono', monospace;color:#1d1d1d;white-space:pre">                }</div><div style="position:absolute;left:830px;width:100px;text-align:right;top:523.61px;font:400 26.5px/26.5px 'Liberation Sans', sans-serif;color:#a5a5a5">67</div><div style="position:absolute;left:979.4px;top:523.67px;font:400 30.9px/30.9px 'Liberation Mono', monospace;color:#1d1d1d;white-space:pre">            }</div><div style="position:absolute;left:830px;width:100px;text-align:right;top:563.61px;font:400 26.5px/26.5px 'Liberation Sans', sans-serif;color:#a5a5a5">68</div><div style="position:absolute;left:979.4px;top:563.67px;font:400 30.9px/30.9px 'Liberation Mono', monospace;color:#1d1d1d;white-space:pre">        }</div><div style="position:absolute;left:830px;width:100px;text-align:right;top:603.61px;font:400 26.5px/26.5px 'Liberation Sans', sans-serif;color:#262626">69</div><div style="position:absolute;left:979.4px;top:603.67px;font:400 30.9px/30.9px 'Liberation Mono', monospace;color:#1d1d1d;white-space:pre">        .<span style="color:#6c36a9">sheet</span>(<span style="color:#6c36a9">isPresented</span>: <span style="color:#3a767c">$isAddEnrolmentSheetShowing</span>, <span style="color:#6c36a9">onDismiss</span>:</div><div style="position:absolute;left:979.4px;top:643.67px;font:400 30.9px/30.9px 'Liberation Mono', monospace;color:#1d1d1d;white-space:pre">            {</div><div style="position:absolute;left:830px;width:100px;text-align:right;top:683.61px;font:400 26.5px/26.5px 'Liberation Sans', sans-serif;color:#262626">70</div><div style="position:absolute;left:830px;width:100px;text-align:right;top:723.61px;font:400 26.5px/26.5px 'Liberation Sans', sans-serif;color:#262626">71</div><div style="position:absolute;left:979.4px;top:723.67px;font:400 30.9px/30.9px 'Liberation Mono', monospace;color:#1d1d1d;white-space:pre">            <span style="color:#667583">// Refresh the list of courses after adding a new</span></div><div style="position:absolute;left:979.4px;top:763.67px;font:400 30.9px/30.9px 'Liberation Mono', monospace;color:#1d1d1d;white-space:pre">                <span style="color:#667583">student</span></div><div style="position:absolute;left:830px;width:100px;text-align:right;top:803.61px;font:400 26.5px/26.5px 'Liberation Sans', sans-serif;color:#262626">72</div><div style="position:absolute;left:979.4px;top:803.67px;font:400 30.9px/30.9px 'Liberation Mono', monospace;color:#1d1d1d;white-space:pre">            <span style="color:#3900a0">Task</span> {</div><div style="position:absolute;left:830px;width:100px;text-align:right;top:843.61px;font:400 26.5px/26.5px 'Liberation Sans', sans-serif;color:#262626">73</div><div style="position:absolute;left:979.4px;top:843.67px;font:400 30.9px/30.9px 'Liberation Mono', monospace;color:#1d1d1d;white-space:pre">                <span style="color:#9e3aa0;font-weight:700">try</span> <span style="color:#9e3aa0;font-weight:700">await</span></div><div style="position:absolute;left:979.4px;top:883.67px;font:400 30.9px/30.9px 'Liberation Mono', monospace;color:#1d1d1d;white-space:pre">                    <span style="color:#3a767c">viewModel</span>.<span style="color:#3a767c">getCoursesWithStudents</span>(<span style="color:#3a767c">selectedBy</span>:</div><div style="position:absolute;left:979.4px;top:923.67px;font:400 30.9px/30.9px 'Liberation Mono', monospace;color:#1d1d1d;white-space:pre">                    <span style="color:#3a767c">viewModel</span>.<span style="color:#3a767c">student</span>!)</div><div style="position:absolute;left:830px;width:100px;text-align:right;top:963.61px;font:400 26.5px/26.5px 'Liberation Sans', sans-serif;color:#262626">74</div><div style="position:absolute;left:979.4px;top:963.67px;font:400 30.9px/30.9px 'Liberation Mono', monospace;color:#1d1d1d;white-space:pre">            }</div><div style="position:absolute;left:830px;width:100px;text-align:right;top:1003.61px;font:400 26.5px/26.5px 'Liberation Sans', sans-serif;color:#262626">75</div><div style="position:absolute;left:830px;width:100px;text-align:right;top:1043.61px;font:400 26.5px/26.5px 'Liberation Sans', sans-serif;color:#262626">76</div><div style="position:absolute;left:979.4px;top:1043.67px;font:400 30.9px/30.9px 'Liberation Mono', monospace;color:#1d1d1d;white-space:pre">        }) {</div><div style="position:absolute;left:830px;width:100px;text-align:right;top:1083.61px;font:400 26.5px/26.5px 'Liberation Sans', sans-serif;color:#a5a5a5">77</div><div style="position:absolute;left:979.4px;top:1083.67px;font:400 30.9px/30.9px 'Liberation Mono', monospace;color:#1d1d1d;white-space:pre">            <span style="color:#667583">// Show the interface to add a student</span></div><div style="position:absolute;left:830px;width:100px;text-align:right;top:1123.61px;font:400 26.5px/26.5px 'Liberation Sans', sans-serif;color:#a5a5a5">78</div><div style="position:absolute;left:979.4px;top:1123.67px;font:400 30.9px/30.9px 'Liberation Mono', monospace;color:#1d1d1d;white-space:pre">            <span style="color:#285559">AddEnrolmentFromEnrolmentsbyCourseView</span>(</div><div style="position:absolute;left:830px;width:100px;text-align:right;top:1163.61px;font:400 26.5px/26.5px 'Liberation Sans', sans-serif;color:#a5a5a5">79</div><div style="position:absolute;left:979.4px;top:1163.67px;font:400 30.9px/30.9px 'Liberation Mono', monospace;color:#1d1d1d;white-space:pre">                <span style="color:#3a767c">isShowing</span>: <span style="color:#3a767c">$isAddEnrolmentSheetShowing</span>,</div><div style="position:absolute;left:830px;width:100px;text-align:right;top:1203.61px;font:400 26.5px/26.5px 'Liberation Sans', sans-serif;color:#a5a5a5">80</div><div style="position:absolute;left:979.4px;top:1203.67px;font:400 30.9px/30.9px 'Liberation Mono', monospace;color:#1d1d1d;white-space:pre">                <span style="color:#3a767c">viewModel</span>:</div><div style="position:absolute;left:979.4px;top:1243.67px;font:400 30.9px/30.9px 'Liberation Mono', monospace;color:#1d1d1d;white-space:pre">                    <span style="color:#285559">AddEnrolmentFromEnrolmentsbyCourseViewModel</span></div><div style="position:absolute;left:979.4px;top:1283.67px;font:400 30.9px/30.9px 'Liberation Mono', monospace;color:#1d1d1d;white-space:pre">                    (<span style="color:#3a767c">availableTo</span>: <span style="color:#3a767c">viewModel</span>.<span style="color:#3a767c">student</span>!)</div><div style="position:absolute;left:830px;width:100px;text-align:right;top:1323.61px;font:400 26.5px/26.5px 'Liberation Sans', sans-serif;color:#a5a5a5">81</div><div style="position:absolute;left:979.4px;top:1323.67px;font:400 30.9px/30.9px 'Liberation Mono', monospace;color:#1d1d1d;white-space:pre">            )</div><div style="position:absolute;left:830px;width:100px;text-align:right;top:1363.61px;font:400 26.5px/26.5px 'Liberation Sans', sans-serif;color:#a5a5a5">82</div><div style="position:absolute;left:979.4px;top:1363.67px;font:400 30.9px/30.9px 'Liberation Mono', monospace;color:#1d1d1d;white-space:pre">        }</div><div style="position:absolute;left:830px;width:100px;text-align:right;top:1403.61px;font:400 26.5px/26.5px 'Liberation Sans', sans-serif;color:#a5a5a5">83</div><div style="position:absolute;left:830px;width:100px;text-align:right;top:1443.61px;font:400 26.5px/26.5px 'Liberation Sans', sans-serif;color:#a5a5a5">84</div><div style="position:absolute;left:979.4px;top:1443.67px;font:400 30.9px/30.9px 'Liberation Mono', monospace;color:#1d1d1d;white-space:pre">        <span style="color:#667583">// Show the student name as the navigation title when</span></div><div style="position:absolute;left:979.4px;top:1483.67px;font:400 30.9px/30.9px 'Liberation Mono', monospace;color:#1d1d1d;white-space:pre">            <span style="color:#667583">filtering by a specific student</span></div><div style="position:absolute;left:830px;width:100px;text-align:right;top:1523.61px;font:400 26.5px/26.5px 'Liberation Sans', sans-serif;color:#a5a5a5">85</div><div style="position:absolute;left:979.4px;top:1523.67px;font:400 30.9px/30.9px 'Liberation Mono', monospace;color:#1d1d1d;white-space:pre">        .<span style="color:#6c36a9">navigationTitle</span>(<span style="color:#3a767c">viewModel</span>.<span style="color:#3a767c">isFilteredByStudent</span> ?</div><div style="position:absolute;left:979.4px;top:1563.67px;font:400 30.9px/30.9px 'Liberation Mono', monospace;color:#1d1d1d;white-space:pre">            <span style="color:#c4302a">"</span>\(<span style="color:#3a767c">viewModel</span>.<span style="color:#3a767c">student</span>!.<span style="color:#3a767c">lastName</span>)<span style="color:#c4302a">,</span></div><div style="position:absolute;left:979.4px;top:1603.67px;font:400 30.9px/30.9px 'Liberation Mono', monospace;color:#1d1d1d;white-space:pre">            \(<span style="color:#3a767c">viewModel</span>.<span style="color:#3a767c">student</span>!.<span style="color:#3a767c">firstName</span>)<span style="color:#c4302a">"</span> : <span style="color:#c4302a">"Courses"</span>)</div><div style="position:absolute;left:830px;width:100px;text-align:right;top:1643.61px;font:400 26.5px/26.5px 'Liberation Sans', sans-serif;color:#a5a5a5">86</div><div style="position:absolute;left:979.4px;top:1643.67px;font:400 30.9px/30.9px 'Liberation Mono', monospace;color:#1d1d1d;white-space:pre">    }</div><div style="position:absolute;left:830px;width:100px;text-align:right;top:1683.61px;font:400 26.5px/26.5px 'Liberation Sans', sans-serif;color:#a5a5a5">87</div><div style="position:absolute;left:979.4px;top:1683.67px;font:400 30.9px/30.9px 'Liberation Mono', monospace;color:#1d1d1d;white-space:pre">}</div><div style="position:absolute;left:830px;width:100px;text-align:right;top:1723.61px;font:400 26.5px/26.5px 'Liberation Sans', sans-serif;color:#a5a5a5">88</div><div style="position:absolute;left:830px;width:100px;text-align:right;top:1763.61px;font:400 26.5px/26.5px 'Liberation Sans', sans-serif;color:#a5a5a5">89</div><div style="position:absolute;left:979.4px;top:1763.67px;font:400 30.9px/30.9px 'Liberation Mono', monospace;color:#1d1d1d;white-space:pre"><span style="color:#6c36a9">#Preview</span> {</div><div style="position:absolute;left:830px;width:100px;text-align:right;top:1803.61px;font:400 26.5px/26.5px 'Liberation Sans', sans-serif;color:#a5a5a5">90</div><div style="position:absolute;left:979.4px;top:1803.67px;font:400 30.9px/30.9px 'Liberation Mono', monospace;color:#1d1d1d;white-space:pre">    <span style="color:#3900a0">NavigationStack</span> {</div><div style="position:absolute;left:1277px;top:269px;width:3px;height:3px;background:#555;border-radius:1px"></div><div style="position:absolute;left:843px;top:190px;width:1405px;height:78px;background:#f3f3f3;box-shadow:0 4px 6px -2px rgba(0,0,0,0.08)"></div><div style="position:absolute;left:843px;top:228px;width:1405px;height:2px;background:#dadada"></div><div style="position:absolute;left:843px;top:267px;width:1405px;height:2px;background:#dadada"></div><div style="position:absolute;left:830px;width:100px;text-align:right;top:196.61px;font:400 26.5px/26.5px 'Liberation Sans', sans-serif;color:#a5a5a5">10</div><div style="position:absolute;left:979.4px;top:196.67px;font:400 30.9px/30.9px 'Liberation Mono', monospace;color:#1d1d1d;white-space:pre"><span style="color:#9e3aa0;font-weight:700">struct</span> <span style="color:#195a85">EnrolmentsByCourseView</span>: <span style="color:#3900a0">View</span> {</div><div style="position:absolute;left:830px;width:100px;text-align:right;top:236.61px;font:400 26.5px/26.5px 'Liberation Sans', sans-serif;color:#a5a5a5">19</div><div style="position:absolute;left:979.4px;top:236.67px;font:400 30.9px/30.9px 'Liberation Mono', monospace;color:#1d1d1d;white-space:pre">    <span style="color:#9e3aa0;font-weight:700">var</span> <span style="color:#2a6ea5">body</span>: <span style="color:#9e3aa0;font-weight:700">some</span> <span style="color:#3900a0">View</span> {</div><div style="position:absolute;left:2256px;top:946px;width:16px;height:567px;background:#808080;border-radius:8px"></div><div style="position:absolute;left:843px;top:1834px;width:2181px;height:54px;background:#fff"></div><div style="position:absolute;left:843px;top:1832px;width:2181px;height:2px;background:#e3e3e3"></div><svg style="position:absolute;left:860px;top:22px;" width="32" height="32" viewBox="0 0 32 32"><circle cx="4.5" cy="4" r="3.3" fill="#6e6e6e"/><circle cx="4.5" cy="27.5" r="3.3" fill="#6e6e6e"/><circle cx="26.5" cy="8" r="3.3" fill="#6e6e6e"/><path d="M4.5 4 L4.5 27.5 M4.5 19 Q4.5 14.5 10 14.5 L21 14.5 Q26.5 14.5 26.5 8" fill="none" stroke="#6e6e6e" stroke-width="2.6"/></svg><div style="position:absolute;left:907px;top:9.85px;font:700 26.8px/26.8px 'Liberation Sans', sans-serif;color:#3d3d3d;white-space:pre;">StudentsAndCourses</div><div style="position:absolute;left:907px;top:40.74px;font:400 22.2px/22.2px 'Liberation Sans', sans-serif;color:#7f7f7f;white-space:pre;">main</div><div style="position:absolute;left:1336px;top:16px;width:1193px;height:44px;background:#f0f0f0;border-radius:11px"></div><svg style="position:absolute;left:1354px;top:27px;" width="23" height="23" viewBox="0 0 23 23"><rect x="0" y="0" width="23" height="23" rx="4.5" fill="#707070"/><path d="M11.5 5 L6.5 16.5 M11.5 5 L16.5 16.5 M5 13.5 L18 13.5 M9.5 5.3 L13.5 5.3" stroke="#fff" stroke-width="1.7" stroke-linecap="round" fill="none"/></svg><div style="position:absolute;left:1390.5px;top:27.40px;font:400 23.2px/23.2px 'Liberation Sans', sans-serif;color:#353535;white-space:pre;">StudentsAndCourses</div><svg style="position:absolute;left:1621px;top:26px;" width="10" height="22" viewBox="0 0 10 22"><path d="M2 2 L8 11 L2 20" fill="none" stroke="#6a6a6a" stroke-width="1.8"/></svg><svg style="position:absolute;left:1651px;top:26px;" width="17" height="25" viewBox="0 0 17 25"><rect x="1.2" y="1.2" width="14.6" height="22.6" rx="3" fill="#e4e4e4" stroke="#6e6e6e" stroke-width="2.2"/><path d="M6 3.8 L11 3.8 M6 20.5 L11 20.5" stroke="#6e6e6e" stroke-width="1.2"/></svg><div style="position:absolute;left:1684px;top:27.40px;font:400 23.2px/23.2px 'Liberation Sans', sans-serif;color:#353535;white-space:pre;">iPhone 15 Pro</div><div style="position:absolute;left:2018px;top:27.40px;font:400 23.2px/23.2px 'Liberation Sans', sans-serif;color:#353535;white-space:pre;">Running StudentsAndCourses on iPhone 15 Pro</div><svg style="position:absolute;left:2869px;top:26px;" width="25" height="25" viewBox="0 0 25 25"><path d="M12.5 1.5 L12.5 23.5 M1.5 12.5 L23.5 12.5" stroke="#6e6e6e" stroke-width="2.6" fill="none"/></svg><svg style="position:absolute;left:2954px;top:21px;" width="41" height="32" viewBox="0 0 41 32"><rect x="1.5" y="1.5" width="38" height="29" rx="5" fill="none" stroke="#6e6e6e" stroke-width="3"/><line x1="26.5" y1="2" x2="26.5" y2="30" stroke="#6e6e6e" stroke-width="3"/><line x1="31" y1="8" x2="35.5" y2="8" stroke="#6e6e6e" stroke-width="2"/><line x1="31" y1="12" x2="35.5" y2="12" stroke="#6e6e6e" stroke-width="2"/><line x1="31" y1="16" x2="35.5" y2="16" stroke="#6e6e6e" stroke-width="2"/></svg><div style="position:absolute;left:700px;width:315.4px;text-align:right;top:94.40px;font:400 23.2px/23.2px 'Liberation Sans', sans-serif;color:#2d2d2d;white-space:pre">EnrolmentsView</div><div style="position:absolute;left:1056px;top:94px;width:2px;height:22px;background:#dedede"></div><svg style="position:absolute;left:1105px;top:94.625px;overflow:visible" width="25" height="21.75" viewBox="2.4 3.3 18.3 16.4"><path d="M13.543 3.41c4.114 2.47 6.545 7.162 5.549 11.131-.024.093-.05.181-.076.272l.002.001c2.062 2.538 1.5 5.258 1.236 4.745-1.072-2.086-3.066-1.568-4.088-1.043a6.803 6.803 0 0 1-.281.158l-.02.012-.002.002c-2.115 1.123-4.957 1.205-7.812-.022a12.568 12.568 0 0 1-5.64-4.838c.649.48 1.35.902 2.097 1.252 3.019 1.414 6.051 1.311 8.197-.002C9.651 12.73 7.101 9.67 5.146 7.191a10.628 10.628 0 0 1-1.005-1.384c2.34 2.142 6.038 4.83 7.365 5.576C8.69 8.408 6.208 4.743 7.353 5.887c3.785 3.836 7.318 6.132 7.318 6.132.117.064.209.114.282.16.074-.195.139-.39.194-.594.6-2.202-.08-4.702-1.596-6.759z" fill="#f27a48"/></svg><div style="position:absolute;left:1140.5px;top:94.40px;font:400 23.2px/23.2px 'Liberation Sans', sans-serif;color:#2d2d2d;white-space:pre;">CoursesListView</div><div style="position:absolute;left:1354px;top:94px;width:2px;height:22px;background:#dedede"></div><svg style="position:absolute;left:1403px;top:94.625px;overflow:visible" width="25" height="21.75" viewBox="2.4 3.3 18.3 16.4"><path d="M13.543 3.41c4.114 2.47 6.545 7.162 5.549 11.131-.024.093-.05.181-.076.272l.002.001c2.062 2.538 1.5 5.258 1.236 4.745-1.072-2.086-3.066-1.568-4.088-1.043a6.803 6.803 0 0 1-.281.158l-.02.012-.002.002c-2.115 1.123-4.957 1.205-7.812-.022a12.568 12.568 0 0 1-5.64-4.838c.649.48 1.35.902 2.097 1.252 3.019 1.414 6.051 1.311 8.197-.002C9.651 12.73 7.101 9.67 5.146 7.191a10.628 10.628 0 0 1-1.005-1.384c2.34 2.142 6.038 4.83 7.365 5.576C8.69 8.408 6.208 4.743 7.353 5.887c3.785 3.836 7.318 6.132 7.318 6.132.117.064.209.114.282.16.074-.195.139-.39.194-.594.6-2.202-.08-4.702-1.596-6.759z" fill="#f27a48"/></svg><div style="position:absolute;left:1438.7px;top:94.40px;font:400 23.2px/23.2px 'Liberation Sans', sans-serif;color:#2d2d2d;white-space:pre;">AddCourseView</div><div style="position:absolute;left:1643px;top:94px;width:2px;height:22px;background:#dedede"></div><svg style="position:absolute;left:1690px;top:94.625px;overflow:visible" width="25" height="21.75" viewBox="2.4 3.3 18.3 16.4"><path d="M13.543 3.41c4.114 2.47 6.545 7.162 5.549 11.131-.024.093-.05.181-.076.272l.002.001c2.062 2.538 1.5 5.258 1.236 4.745-1.072-2.086-3.066-1.568-4.088-1.043a6.803 6.803 0 0 1-.281.158l-.02.012-.002.002c-2.115 1.123-4.957 1.205-7.812-.022a12.568 12.568 0 0 1-5.64-4.838c.649.48 1.35.902 2.097 1.252 3.019 1.414 6.051 1.311 8.197-.002C9.651 12.73 7.101 9.67 5.146 7.191a10.628 10.628 0 0 1-1.005-1.384c2.34 2.142 6.038 4.83 7.365 5.576C8.69 8.408 6.208 4.743 7.353 5.887c3.785 3.836 7.318 6.132 7.318 6.132.117.064.209.114.282.16.074-.195.139-.39.194-.594.6-2.202-.08-4.702-1.596-6.759z" fill="#f27a48"/></svg><div style="position:absolute;left:1726px;top:94.40px;font:400 23.2px/23.2px 'Liberation Sans', sans-serif;color:#2d2d2d;white-space:pre;">AddEnrolm…yCourseView</div><div style="position:absolute;left:2036px;top:78px;width:392px;height:54px;background:#d6e4fb"></div><svg style="position:absolute;left:2082px;top:94.625px;overflow:visible" width="25" height="21.75" viewBox="2.4 3.3 18.3 16.4"><path d="M13.543 3.41c4.114 2.47 6.545 7.162 5.549 11.131-.024.093-.05.181-.076.272l.002.001c2.062 2.538 1.5 5.258 1.236 4.745-1.072-2.086-3.066-1.568-4.088-1.043a6.803 6.803 0 0 1-.281.158l-.02.012-.002.002c-2.115 1.123-4.957 1.205-7.812-.022a12.568 12.568 0 0 1-5.64-4.838c.649.48 1.35.902 2.097 1.252 3.019 1.414 6.051 1.311 8.197-.002C9.651 12.73 7.101 9.67 5.146 7.191a10.628 10.628 0 0 1-1.005-1.384c2.34 2.142 6.038 4.83 7.365 5.576C8.69 8.408 6.208 4.743 7.353 5.887c3.785 3.836 7.318 6.132 7.318 6.132.117.064.209.114.282.16.074-.195.139-.39.194-.594.6-2.202-.08-4.702-1.596-6.759z" fill="#f27a48"/></svg><div style="position:absolute;left:2118px;top:94.40px;font:400 23.2px/23.2px 'Liberation Sans', sans-serif;color:#3a7bf0;white-space:pre;">EnrolmentsByCourseView</div><svg style="position:absolute;left:2475px;top:94.625px;overflow:visible" width="25" height="21.75" viewBox="2.4 3.3 18.3 16.4"><path d="M13.543 3.41c4.114 2.47 6.545 7.162 5.549 11.131-.024.093-.05.181-.076.272l.002.001c2.062 2.538 1.5 5.258 1.236 4.745-1.072-2.086-3.066-1.568-4.088-1.043a6.803 6.803 0 0 1-.281.158l-.02.012-.002.002c-2.115 1.123-4.957 1.205-7.812-.022a12.568 12.568 0 0 1-5.64-4.838c.649.48 1.35.902 2.097 1.252 3.019 1.414 6.051 1.311 8.197-.002C9.651 12.73 7.101 9.67 5.146 7.191a10.628 10.628 0 0 1-1.005-1.384c2.34 2.142 6.038 4.83 7.365 5.576C8.69 8.408 6.208 4.743 7.353 5.887c3.785 3.836 7.318 6.132 7.318 6.132.117.064.209.114.282.16.074-.195.139-.39.194-.594.6-2.202-.08-4.702-1.596-6.759z" fill="#f27a48"/></svg><div style="position:absolute;left:2509px;top:94.40px;font:400 23.2px/23.2px 'Liberation Sans', sans-serif;color:#2d2d2d;white-space:pre;font-style:italic">Enrolments…eViewModel</div><div style="position:absolute;left:2818px;top:94px;width:2px;height:22px;background:#dedede"></div><div style="position:absolute;left:2830px;top:78px;width:12px;height:54px;background:linear-gradient(to left, rgba(0,0,0,0.09), rgba(0,0,0,0))"></div><div style="position:absolute;left:2842px;top:78px;width:182px;height:54px;background:#fff"></div><div style="position:absolute;left:2842px;top:78px;width:2px;height:54px;background:#c4c4c4"></div><svg style="position:absolute;left:2857px;top:90px;" width="30" height="30" viewBox="0 0 30 30"><path d="M8 8.7 L27 8.7 M19.6 2.2 L26.5 8.7 L19.6 15.2 M22 21 L3.8 21 M10.6 14.4 L3.8 21 L10.6 27.6" fill="none" stroke="#6e6e6e" stroke-width="2.1" stroke-linejoin="miter"/></svg><svg style="position:absolute;left:2904px;top:90px;" width="40" height="30" viewBox="0 0 40 30"><path d="M2.4 2.8 L14 2.8 M2.4 8.7 L18 8.7 M2.4 15 L14 15 M2.4 21 L18 21 M2.4 27 L18 27" stroke="#6e6e6e" stroke-width="2.1"/><rect x="23.5" y="3.4" width="13.6" height="23" fill="none" stroke="#6e6e6e" stroke-width="2.1"/><rect x="27.5" y="7.6" width="6" height="14.6" fill="none" stroke="#6e6e6e" stroke-width="1.9"/></svg><div style="position:absolute;left:2960px;top:94px;width:2px;height:22px;background:#dedede"></div><svg style="position:absolute;left:2979px;top:91px;" width="28" height="28" viewBox="0 0 28 28"><rect x="1.5" y="1.5" width="25" height="25" rx="3" fill="none" stroke="#6e6e6e" stroke-width="2.4"/><path d="M10 2 L10 26 M18 9 L18 19 M13 14 L23 14" stroke="#6e6e6e" stroke-width="2.2" fill="none"/></svg><div style="position:absolute;left:843px;top:78px;width:151px;height:54px;background:#fff"></div><div style="position:absolute;left:995px;top:78px;width:11px;height:54px;background:linear-gradient(to right, rgba(0,0,0,0.09), rgba(0,0,0,0))"></div><div style="position:absolute;left:993.5px;top:78px;width:2px;height:54px;background:#c4c4c4"></div><svg style="position:absolute;left:859px;top:92px;" width="28" height="28" viewBox="0 0 28 28"><path d="M1.5 1.5 L11 1.5 L11 11 L1.5 11Z M1.5 16 L11 16 L11 25.5 L1.5 25.5Z M16 16 L25.5 16 L25.5 25.5 L16 25.5Z M16 1.5 L25.5 1.5 L25.5 11 L16 11Z M11 6 L16 6 M6 11 L6 16 M11 21 L16 21 M21 11 L21 16" fill="none" stroke="#6e6e6e" stroke-width="2"/></svg><div style="position:absolute;left:904px;top:95px;width:2px;height:21px;background:#d6d6d6"></div><svg style="position:absolute;left:920px;top:90px;" width="20" height="30" viewBox="0 0 20 30"><path d="M17 2.5 L3.5 15 L17 27.5" fill="none" stroke="#6e6e6e" stroke-width="2.4" stroke-linecap="round" stroke-linejoin="round"/></svg><svg style="position:absolute;left:959px;top:90px;" width="20" height="30" viewBox="0 0 20 30"><path d="M3 2.5 L16.5 15 L3 27.5" fill="none" stroke="#6e6e6e" stroke-width="2.4" stroke-linecap="round" stroke-linejoin="round"/></svg><svg style="position:absolute;left:859px;top:147.5px;" width="25" height="25" viewBox="0 0 30 30"><rect x="0.5" y="0.5" width="29" height="29" rx="6.5" fill="#2a84f7"/><rect x="2.5" y="2.5" width="25" height="25" rx="5" fill="none" stroke="#fff" stroke-width="1.4" opacity="0.9"/><path d="M15 7 L8.5 21 M15 7 L21.5 21 M7 17.5 L23 17.5 M12.5 7.5 L17.5 7.5" stroke="#fff" stroke-width="2" stroke-linecap="round" fill="none"/></svg><div style="position:absolute;left:897px;top:150.40px;font:400 23.2px/23.2px 'Liberation Sans', sans-serif;color:#2d2d2d;white-space:pre;">StudentsAndCourses</div><svg style="position:absolute;left:1127px;top:150px;" width="9" height="24" viewBox="0 0 9 24"><path d="M1.5 2 L7 12 L1.5 22" fill="none" stroke="#7a7a7a" stroke-width="1.8"/></svg><svg style="position:absolute;left:1153px;top:150.25px;" width="25" height="21.5" viewBox="0 0 29 25"><path d="M0 4 Q0 0.5 3.5 0.5 L9 0.5 Q11 0.5 12.5 2 L14 3.5 L25.5 3.5 Q29 3.5 29 7 L29 7.8 L0 7.8Z" fill="#8a8f94"/><path d="M0 10 L29 10 L29 21.5 Q29 25 25.5 25 L3.5 25 Q0 25 0 21.5Z" fill="#8a8f94"/></svg><div style="position:absolute;left:1190.5px;top:150.40px;font:400 23.2px/23.2px 'Liberation Sans', sans-serif;color:#2d2d2d;white-space:pre;">StudentsAndCourses</div><svg style="position:absolute;left:1421px;top:150px;" width="9" height="24" viewBox="0 0 9 24"><path d="M1.5 2 L7 12 L1.5 22" fill="none" stroke="#7a7a7a" stroke-width="1.8"/></svg><svg style="position:absolute;left:1447px;top:150.25px;" width="25" height="21.5" viewBox="0 0 29 25"><path d="M0 4 Q0 0.5 3.5 0.5 L9 0.5 Q11 0.5 12.5 2 L14 3.5 L25.5 3.5 Q29 3.5 29 7 L29 7.8 L0 7.8Z" fill="#8a8f94"/><path d="M0 10 L29 10 L29 21.5 Q29 25 25.5 25 L3.5 25 Q0 25 0 21.5Z" fill="#8a8f94"/></svg><div style="position:absolute;left:1485px;top:150.40px;font:400 23.2px/23.2px 'Liberation Sans', sans-serif;color:#2d2d2d;white-space:pre;">Views</div><svg style="position:absolute;left:1556px;top:150px;" width="9" height="24" viewBox="0 0 9 24"><path d="M1.5 2 L7 12 L1.5 22" fill="none" stroke="#7a7a7a" stroke-width="1.8"/></svg><svg style="position:absolute;left:1581px;top:149.69px;overflow:visible" width="26" height="22.62" viewBox="2.4 3.3 18.3 16.4"><path d="M13.543 3.41c4.114 2.47 6.545 7.162 5.549 11.131-.024.093-.05.181-.076.272l.002.001c2.062 2.538 1.5 5.258 1.236 4.745-1.072-2.086-3.066-1.568-4.088-1.043a6.803 6.803 0 0 1-.281.158l-.02.012-.002.002c-2.115 1.123-4.957 1.205-7.812-.022a12.568 12.568 0 0 1-5.64-4.838c.649.48 1.35.902 2.097 1.252 3.019 1.414 6.051 1.311 8.197-.002C9.651 12.73 7.101 9.67 5.146 7.191a10.628 10.628 0 0 1-1.005-1.384c2.34 2.142 6.038 4.83 7.365 5.576C8.69 8.408 6.208 4.743 7.353 5.887c3.785 3.836 7.318 6.132 7.318 6.132.117.064.209.114.282.16.074-.195.139-.39.194-.594.6-2.202-.08-4.702-1.596-6.759z" fill="#f06a38"/></svg><div style="position:absolute;left:1618px;top:150.40px;font:400 23.2px/23.2px 'Liberation Sans', sans-serif;color:#2d2d2d;white-space:pre;">EnrolmentsByCourseView</div><svg style="position:absolute;left:1898px;top:150px;" width="9" height="24" viewBox="0 0 9 24"><path d="M1.5 2 L7 12 L1.5 22" fill="none" stroke="#7a7a7a" stroke-width="1.8"/></svg><div style="position:absolute;left:1922px;top:146px;width:28px;height:28px;background:#54bcd8;border-radius:5px"></div><div style="position:absolute;left:1929.5px;top:150.75px;font:400 21px/21px 'Liberation Sans', sans-serif;color:#fff;white-space:pre;">P</div><div style="position:absolute;left:1960px;top:150.40px;font:400 23.2px/23.2px 'Liberation Sans', sans-serif;color:#2d2d2d;white-space:pre;">body</div><svg style="position:absolute;left:864px;top:1851px;" width="31" height="20" viewBox="0 0 31 20"><path d="M3 0.5 L22 0.5 Q24 0.5 25.5 2 L30.5 10 L25.5 18 Q24 19.5 22 19.5 L3 19.5 Q0.5 19.5 0.5 17 L0.5 3 Q0.5 0.5 3 0.5Z" fill="#3a7ef4"/></svg><div style="position:absolute;left:910px;top:1850px;width:2px;height:22px;background:#dcdcdc"></div><svg style="position:absolute;left:932px;top:1847px;" width="21" height="29" viewBox="0 0 21 29"><rect x="2" y="2" width="4.5" height="25" rx="1.5" fill="none" stroke="#6e6e6e" stroke-width="2"/><rect x="14.5" y="2" width="4.5" height="25" rx="1.5" fill="none" stroke="#6e6e6e" stroke-width="2"/></svg><svg style="position:absolute;left:988px;top:1847px;" width="30" height="29" viewBox="0 0 30 29"><path d="M1.5 13.5 L13 3.5 L24 12 M18 12.3 L24.5 12.5 L24.5 6" fill="none" stroke="#c4c4c4" stroke-width="2"/><rect x="5" y="23.5" width="16" height="4" fill="none" stroke="#c4c4c4" stroke-width="2"/></svg><svg style="position:absolute;left:1052px;top:1847px;" width="20" height="29" viewBox="0 0 20 29"><path d="M10 1 L10 15 M4 9.5 L10 15.5 L16 9.5" fill="none" stroke="#c4c4c4" stroke-width="2"/><rect x="2" y="21" width="16" height="5" fill="none" stroke="#c4c4c4" stroke-width="2"/></svg><svg style="position:absolute;left:1112px;top:1847px;" width="20" height="29" viewBox="0 0 20 29"><path d="M10 16 L10 2 M4 7.5 L10 1.5 L16 7.5" fill="none" stroke="#c4c4c4" stroke-width="2"/><rect x="2" y="21" width="16" height="5" fill="none" stroke="#c4c4c4" stroke-width="2"/></svg><div style="position:absolute;left:1152px;top:1850px;width:2px;height:22px;background:#dcdcdc"></div><svg style="position:absolute;left:1172px;top:1847px;" width="24" height="29" viewBox="0 0 24 29"><path d="M9.5 9 L22.5 5 L22.5 22 L9.5 26.5Z M6 7.5 L19 3.5 M6 7.5 L6 24 M2.2 5.5 L15.2 1.5 M2.2 5.5 L2.2 21.5" fill="none" stroke="#6e6e6e" stroke-width="2" stroke-linejoin="round"/></svg><svg style="position:absolute;left:1229px;top:1848px;" width="29" height="28" viewBox="0 0 29 28"><circle cx="6.5" cy="5.5" r="4.2" fill="none" stroke="#6e6e6e" stroke-width="2"/><circle cx="6.5" cy="21.5" r="4.2" fill="none" stroke="#6e6e6e" stroke-width="2"/><circle cx="23.5" cy="13.5" r="4.2" fill="none" stroke="#6e6e6e" stroke-width="2"/><path d="M10.2 7.5 L19.6 11.6 M10.2 19.5 L19.6 15.4" stroke="#6e6e6e" stroke-width="2"/></svg><svg style="position:absolute;left:1292px;top:1847px;" width="24" height="28" viewBox="0 0 24 28"><rect x="1.2" y="1.5" width="21.6" height="11" rx="5.5" fill="none" stroke="#6e6e6e" stroke-width="2.1"/><circle cx="7" cy="7" r="3.1" fill="#6e6e6e"/><rect x="1.2" y="15.5" width="21.6" height="11" rx="5.5" fill="none" stroke="#6e6e6e" stroke-width="2.1"/><circle cx="17" cy="21" r="3.1" fill="#6e6e6e"/></svg><svg style="position:absolute;left:1350px;top:1848px;" width="28" height="28" viewBox="0 0 28 28"><path d="M26 2 L2 12 L13 15 L16 26Z" fill="none" stroke="#6e6e6e" stroke-width="2.2" stroke-linejoin="round"/></svg><div style="position:absolute;left:1394px;top:1850px;width:2px;height:22px;background:#dcdcdc"></div><svg style="position:absolute;left:1414px;top:1850px;" width="23" height="23" viewBox="0 0 23 23"><rect x="0" y="0" width="23" height="23" rx="4.5" fill="#707070"/><path d="M11.5 5 L6.5 16.5 M11.5 5 L16.5 16.5 M5 13.5 L18 13.5 M9.5 5.3 L13.5 5.3" stroke="#fff" stroke-width="1.7" stroke-linecap="round" fill="none"/></svg><div style="position:absolute;left:1450px;top:1849.90px;font:400 23.2px/23.2px 'Liberation Sans', sans-serif;color:#2d2d2d;white-space:pre;">StudentsAndCourses</div><div style="position:absolute;left:2866.7px;top:1849.22px;font:400 24px/24px 'Liberation Sans', sans-serif;color:#8a8a8a;white-space:pre;">8 lines</div><div style="position:absolute;left:2954px;top:1850px;width:2px;height:22px;background:#dcdcdc"></div><svg style="position:absolute;left:2972px;top:1848px;" width="28" height="27" viewBox="0 0 28 27"><rect x="1.2" y="1.2" width="25.6" height="24.6" rx="3.5" fill="none" stroke="#6e6e6e" stroke-width="2.2"/><rect x="4.5" y="17" width="19" height="6" rx="1" fill="#6e6e6e"/></svg><div style="position:absolute;left:2304px;top:214px;width:63px;height:52px;background:#fff;border-radius:11px;box-shadow:0 1px 3px rgba(0,0,0,0.15)"></div><svg style="position:absolute;left:2322px;top:224px;" width="27" height="32" viewBox="0 0 27 32"><path d="M7 2 L20 2 M9 2.5 L9 12 L3 19 L24 19 L18 12 L18 2.5 M13.5 19 L13.5 30" fill="none" stroke="#4a4a4a" stroke-width="2.2" stroke-linejoin="round"/></svg><div style="position:absolute;left:2387px;top:214px;width:337px;height:52px;background:#cedefa;border-radius:11px;box-shadow:0 1px 3px rgba(0,0,0,0.12)"></div><svg style="position:absolute;left:2404px;top:226px;" width="24" height="26" viewBox="0 0 24 26"><rect x="1.5" y="8" width="21" height="16.5" rx="3" fill="none" stroke="#3b7cf0" stroke-width="2.2"/><path d="M4 4.5 L20 4.5 M6 1.2 L18 1.2" stroke="#3b7cf0" stroke-width="1.6"/></svg><div style="position:absolute;left:2440px;top:228.98px;font:400 23.1px/23.1px 'Liberation Sans', sans-serif;color:#3b7bf0;white-space:pre;">EnrolmentsByCourseView</div><div style="position:absolute;left:2327px;top:586px;width:7px;height:48px;background:#353535;border-radius:2px 0 0 2px"></div><div style="position:absolute;left:2327px;top:678px;width:7px;height:93px;background:#353535;border-radius:2px 0 0 2px"></div><div style="position:absolute;left:2327px;top:797px;width:7px;height:92px;background:#353535;border-radius:2px 0 0 2px"></div><div style="position:absolute;left:2971px;top:739px;width:6px;height:150px;background:#353535;border-radius:0 2px 2px 0"></div><div style="position:absolute;left:2335px;top:348px;width:635px;height:1325px;background:#303030;border-radius:120px"></div><div style="position:absolute;left:2343px;top:356px;width:618px;height:1309px;background:#000;border-radius:112px"></div><div style="position:absolute;left:2358px;top:372px;width:589px;height:1279px;background:#f2f2f7;border-radius:94px;overflow:hidden"><div style="position:absolute;left:201px;top:17px;width:187px;height:54px;background:#000;border-radius:27px"></div><div style="position:absolute;left:24px;top:159.59px;font:700 49px/49px 'Liberation Sans', sans-serif;color:#000;white-space:pre;">Courses</div><div style="position:absolute;left:30px;top:224px;width:529px;height:1200px;background:#fff;border-radius:20px"></div><div style="position:absolute;left:60px;top:244.38px;font:700 25px/25px 'Liberation Sans', sans-serif;color:#000;white-space:pre;">ADA3M</div><div style="position:absolute;left:60px;top:277.23px;font:400 22.8px/22.8px 'Liberation Sans', sans-serif;color:#000;white-space:pre;">Drama</div><div style="position:absolute;left:481px;top:258.51px;font:400 32.5px/32.5px 'Liberation Mono', monospace;color:#8a8a8e;white-space:pre;">1</div><svg style="position:absolute;left:516px;top:261.05px;" width="13" height="20" viewBox="0 0 13 20"><path d="M2 2 L10.5 10 L2 18" fill="none" stroke="#c4c4c6" stroke-width="2.6" stroke-linecap="round" stroke-linejoin="round"/></svg><div style="position:absolute;left:60px;top:317.1px;width:499px;height:1px;background:#dcdce0"></div><div style="position:absolute;left:60px;top:338.48px;font:700 25px/25px 'Liberation Sans', sans-serif;color:#000;white-space:pre;">AMU3M</div><div style="position:absolute;left:60px;top:371.33px;font:400 22.8px/22.8px 'Liberation Sans', sans-serif;color:#000;white-space:pre;">Music</div><div style="position:absolute;left:481px;top:352.61px;font:400 32.5px/32.5px 'Liberation Mono', monospace;color:#8a8a8e;white-space:pre;">0</div><svg style="position:absolute;left:516px;top:355.15000000000003px;" width="13" height="20" viewBox="0 0 13 20"><path d="M2 2 L10.5 10 L2 18" fill="none" stroke="#c4c4c6" stroke-width="2.6" stroke-linecap="round" stroke-linejoin="round"/></svg><div style="position:absolute;left:60px;top:411.20000000000005px;width:499px;height:1px;background:#dcdce0"></div><div style="position:absolute;left:60px;top:432.58px;font:700 25px/25px 'Liberation Sans', sans-serif;color:#000;white-space:pre;">AVI3M</div><div style="position:absolute;left:60px;top:465.43px;font:400 22.8px/22.8px 'Liberation Sans', sans-serif;color:#000;white-space:pre;">Visual Arts</div><div style="position:absolute;left:481px;top:446.71px;font:400 32.5px/32.5px 'Liberation Mono', monospace;color:#8a8a8e;white-space:pre;">1</div><svg style="position:absolute;left:516px;top:449.25000000000006px;" width="13" height="20" viewBox="0 0 13 20"><path d="M2 2 L10.5 10 L2 18" fill="none" stroke="#c4c4c6" stroke-width="2.6" stroke-linecap="round" stroke-linejoin="round"/></svg><div style="position:absolute;left:60px;top:505.30000000000007px;width:499px;height:1px;background:#dcdce0"></div><div style="position:absolute;left:60px;top:526.68px;font:700 25px/25px 'Liberation Sans', sans-serif;color:#000;white-space:pre;">CGG3O</div><div style="position:absolute;left:60px;top:559.53px;font:400 22.8px/22.8px 'Liberation Sans', sans-serif;color:#000;white-space:pre;">Travel and Tourism: A Regional</div><div style="position:absolute;left:60px;top:589.03px;font:400 22.8px/22.8px 'Liberation Sans', sans-serif;color:#000;white-space:pre;">Geographic Perspective</div><div style="position:absolute;left:481px;top:555.61px;font:400 32.5px/32.5px 'Liberation Mono', monospace;color:#8a8a8e;white-space:pre;">2</div><svg style="position:absolute;left:516px;top:558.1500000000001px;" width="13" height="20" viewBox="0 0 13 20"><path d="M2 2 L10.5 10 L2 18" fill="none" stroke="#c4c4c6" stroke-width="2.6" stroke-linecap="round" stroke-linejoin="round"/></svg><div style="position:absolute;left:60px;top:629.0000000000001px;width:499px;height:1px;background:#dcdce0"></div><div style="position:absolute;left:60px;top:650.38px;font:700 25px/25px 'Liberation Sans', sans-serif;color:#000;white-space:pre;">CHW3M</div><div style="position:absolute;left:60px;top:683.23px;font:400 22.8px/22.8px 'Liberation Sans', sans-serif;color:#000;white-space:pre;">World History to the End of the</div><div style="position:absolute;left:60px;top:712.73px;font:400 22.8px/22.8px 'Liberation Sans', sans-serif;color:#000;white-space:pre;">Fifteenth Century</div><div style="position:absolute;left:481px;top:679.31px;font:400 32.5px/32.5px 'Liberation Mono', monospace;color:#8a8a8e;white-space:pre;">1</div><svg style="position:absolute;left:516px;top:681.8500000000001px;" width="13" height="20" viewBox="0 0 13 20"><path d="M2 2 L10.5 10 L2 18" fill="none" stroke="#c4c4c6" stroke-width="2.6" stroke-linecap="round" stroke-linejoin="round"/></svg><div style="position:absolute;left:60px;top:752.7000000000002px;width:499px;height:1px;background:#dcdce0"></div><div style="position:absolute;left:60px;top:774.08px;font:700 25px/25px 'Liberation Sans', sans-serif;color:#000;white-space:pre;">ENG3U</div><div style="position:absolute;left:60px;top:806.93px;font:400 22.8px/22.8px 'Liberation Sans', sans-serif;color:#000;white-space:pre;">English</div><div style="position:absolute;left:481px;top:788.21px;font:400 32.5px/32.5px 'Liberation Mono', monospace;color:#8a8a8e;white-space:pre;">3</div><svg style="position:absolute;left:516px;top:790.7500000000001px;" width="13" height="20" viewBox="0 0 13 20"><path d="M2 2 L10.5 10 L2 18" fill="none" stroke="#c4c4c6" stroke-width="2.6" stroke-linecap="round" stroke-linejoin="round"/></svg><div style="position:absolute;left:60px;top:846.8000000000002px;width:499px;height:1px;background:#dcdce0"></div><div style="position:absolute;left:60px;top:868.18px;font:700 25px/25px 'Liberation Sans', sans-serif;color:#000;white-space:pre;">FSF3U</div><div style="position:absolute;left:60px;top:901.03px;font:400 22.8px/22.8px 'Liberation Sans', sans-serif;color:#000;white-space:pre;">Core French</div><div style="position:absolute;left:481px;top:882.31px;font:400 32.5px/32.5px 'Liberation Mono', monospace;color:#8a8a8e;white-space:pre;">1</div><svg style="position:absolute;left:516px;top:884.8500000000001px;" width="13" height="20" viewBox="0 0 13 20"><path d="M2 2 L10.5 10 L2 18" fill="none" stroke="#c4c4c6" stroke-width="2.6" stroke-linecap="round" stroke-linejoin="round"/></svg><div style="position:absolute;left:60px;top:940.9000000000002px;width:499px;height:1px;background:#dcdce0"></div><div style="position:absolute;left:60px;top:962.28px;font:700 25px/25px 'Liberation Sans', sans-serif;color:#000;white-space:pre;">ICS3U</div><div style="position:absolute;left:60px;top:995.13px;font:400 22.8px/22.8px 'Liberation Sans', sans-serif;color:#000;white-space:pre;">Introduction to Computer Science</div><div style="position:absolute;left:481px;top:976.41px;font:400 32.5px/32.5px 'Liberation Mono', monospace;color:#8a8a8e;white-space:pre;">2</div><svg style="position:absolute;left:516px;top:978.9500000000002px;" width="13" height="20" viewBox="0 0 13 20"><path d="M2 2 L10.5 10 L2 18" fill="none" stroke="#c4c4c6" stroke-width="2.6" stroke-linecap="round" stroke-linejoin="round"/></svg><div style="position:absolute;left:60px;top:1035.0000000000002px;width:499px;height:1px;background:#dcdce0"></div><div style="position:absolute;left:60px;top:1056.38px;font:700 25px/25px 'Liberation Sans', sans-serif;color:#000;white-space:pre;">MCR3U</div><div style="position:absolute;left:60px;top:1089.23px;font:400 22.8px/22.8px 'Liberation Sans', sans-serif;color:#000;white-space:pre;">Functions</div><div style="position:absolute;left:481px;top:1070.51px;font:400 32.5px/32.5px 'Liberation Mono', monospace;color:#8a8a8e;white-space:pre;">3</div><svg style="position:absolute;left:516px;top:1073.0500000000002px;" width="13" height="20" viewBox="0 0 13 20"><path d="M2 2 L10.5 10 L2 18" fill="none" stroke="#c4c4c6" stroke-width="2.6" stroke-linecap="round" stroke-linejoin="round"/></svg><div style="position:absolute;left:60px;top:1129.1000000000001px;width:499px;height:1px;background:#dcdce0"></div><div style="position:absolute;left:60px;top:1150.48px;font:700 25px/25px 'Liberation Sans', sans-serif;color:#000;white-space:pre;">SBI3U</div><div style="position:absolute;left:60px;top:1183.33px;font:400 22.8px/22.8px 'Liberation Sans', sans-serif;color:#000;white-space:pre;">Biology</div><div style="position:absolute;left:481px;top:1164.61px;font:400 32.5px/32.5px 'Liberation Mono', monospace;color:#8a8a8e;white-space:pre;">1</div><svg style="position:absolute;left:516px;top:1167.15px;" width="13" height="20" viewBox="0 0 13 20"><path d="M2 2 L10.5 10 L2 18" fill="none" stroke="#c4c4c6" stroke-width="2.6" stroke-linecap="round" stroke-linejoin="round"/></svg><div style="position:absolute;left:60px;top:1223.2px;width:499px;height:1px;background:#dcdce0"></div><div style="position:absolute;left:60px;top:1244.58px;font:700 25px/25px 'Liberation Sans', sans-serif;color:#000;white-space:pre;">SCH3U</div><div style="position:absolute;left:60px;top:1277.43px;font:400 22.8px/22.8px 'Liberation Sans', sans-serif;color:#000;white-space:pre;">Chemistry</div><div style="position:absolute;left:481px;top:1258.71px;font:400 32.5px/32.5px 'Liberation Mono', monospace;color:#8a8a8e;white-space:pre;">2</div><svg style="position:absolute;left:516px;top:1261.25px;" width="13" height="20" viewBox="0 0 13 20"><path d="M2 2 L10.5 10 L2 18" fill="none" stroke="#c4c4c6" stroke-width="2.6" stroke-linecap="round" stroke-linejoin="round"/></svg></div><div style="position:absolute;left:2304px;top:1756px;width:163px;height:52px;background:#fff;border-radius:13px;box-shadow:0 1px 3px rgba(0,0,0,0.14)"></div><div style="position:absolute;left:2487px;top:1756px;width:63px;height:52px;background:#fff;border-radius:13px;box-shadow:0 1px 3px rgba(0,0,0,0.14)"></div><div style="position:absolute;left:2570px;top:1756px;width:54px;height:52px;background:#fff;border-radius:13px;box-shadow:0 1px 3px rgba(0,0,0,0.14)"></div><div style="position:absolute;left:2792px;top:1756px;width:208px;height:52px;background:#fff;border-radius:13px;box-shadow:0 1px 3px rgba(0,0,0,0.14)"></div><svg style="position:absolute;left:2322px;top:1769px;" width="26" height="26" viewBox="0 0 26 26"><circle cx="13" cy="13" r="13" fill="#3a7ef4"/><path d="M10 7.5 L18.5 13 L10 18.5Z" fill="#fff"/></svg><svg style="position:absolute;left:2370px;top:1769px;" width="24" height="24" viewBox="0 0 24 24"><rect x="1.2" y="1.2" width="21.6" height="21.6" rx="2.5" fill="none" stroke="#555" stroke-width="2.2"/><path d="M8 5.5 L8 18.5 L10.8 15.8 L13 20.5 L15 19.6 L12.9 15 L16.8 14.6Z" fill="#555"/></svg><svg style="position:absolute;left:2423px;top:1772px;" width="25" height="20" viewBox="0 0 25 20"><g fill="none" stroke="#555" stroke-width="1.8"><rect x="1" y="1" width="5.5" height="7" rx="1"/><rect x="9.75" y="1" width="5.5" height="7" rx="1"/><rect x="18.5" y="1" width="5.5" height="7" rx="1"/><rect x="1" y="12" width="5.5" height="7" rx="1"/><rect x="9.75" y="12" width="5.5" height="7" rx="1"/><rect x="18.5" y="12" width="5.5" height="7" rx="1"/></g></svg><svg style="position:absolute;left:2505px;top:1770px;" width="26" height="25" viewBox="0 0 26 25"><rect x="1.2" y="1.2" width="23.6" height="9.6" rx="4.8" fill="none" stroke="#555" stroke-width="2"/><circle cx="6.5" cy="6" r="2.8" fill="#555"/><rect x="1" y="13.5" width="24" height="11" rx="5.5" fill="#555"/><circle cx="19.5" cy="19" r="3.4" fill="#fff"/></svg><svg style="position:absolute;left:2589.5px;top:1770.5px;" width="15" height="24" viewBox="0 0 15 24"><rect x="1.1" y="1.1" width="12.8" height="21.8" rx="2.5" fill="#d6d6d6" stroke="#555" stroke-width="2"/><path d="M5 3.8 L10 3.8 M5 19.8 L10 19.8" stroke="#555" stroke-width="1.2"/></svg><svg style="position:absolute;left:2810px;top:1768px;" width="27" height="28" viewBox="0 0 27 28"><circle cx="11" cy="11" r="9" fill="none" stroke="#555" stroke-width="2.4"/><path d="M17.5 17.5 L25 25" stroke="#555" stroke-width="3.2" stroke-linecap="round"/><path d="M6.5 11 L15.5 11" stroke="#555" stroke-width="2.2"/></svg><svg style="position:absolute;left:2858px;top:1768px;" width="27" height="28" viewBox="0 0 27 28"><circle cx="11" cy="11" r="9" fill="none" stroke="#555" stroke-width="2.4"/><path d="M17.5 17.5 L25 25" stroke="#555" stroke-width="3.2" stroke-linecap="round"/><path d="M9 7.5 L11.5 6 L11.5 15.5" fill="none" stroke="#555" stroke-width="2"/></svg><svg style="position:absolute;left:2906px;top:1768px;" width="27" height="28" viewBox="0 0 27 28"><circle cx="11" cy="11" r="9" fill="none" stroke="#555" stroke-width="2.4"/><path d="M17.5 17.5 L25 25" stroke="#555" stroke-width="3.2" stroke-linecap="round"/><rect x="7.5" y="7.5" width="7" height="7" rx="1" fill="none" stroke="#555" stroke-width="2"/></svg><svg style="position:absolute;left:2954px;top:1768px;" width="27" height="28" viewBox="0 0 27 28"><circle cx="11" cy="11" r="9" fill="none" stroke="#555" stroke-width="2.4"/><path d="M17.5 17.5 L25 25" stroke="#555" stroke-width="3.2" stroke-linecap="round"/><path d="M6.5 11 L15.5 11 M11 6.5 L11 15.5" stroke="#555" stroke-width="2.2"/></svg><svg style="position:absolute;left:0px;top:0px;" width="20" height="20" viewBox="0 0 20 20"><path d="M0 0 L18 0 Q1 1 0 18Z" fill="#ffffff"/></svg><div style="position:absolute;left:0px;top:0px;width:14px;height:1px;background:#000"></div><svg style="position:absolute;left:0px;top:1866px;" width="22" height="22" viewBox="0 0 22 22"><path d="M0 22 L20 22 Q1 21 0 2Z" fill="#ffffff"/></svg>
</body></html>
